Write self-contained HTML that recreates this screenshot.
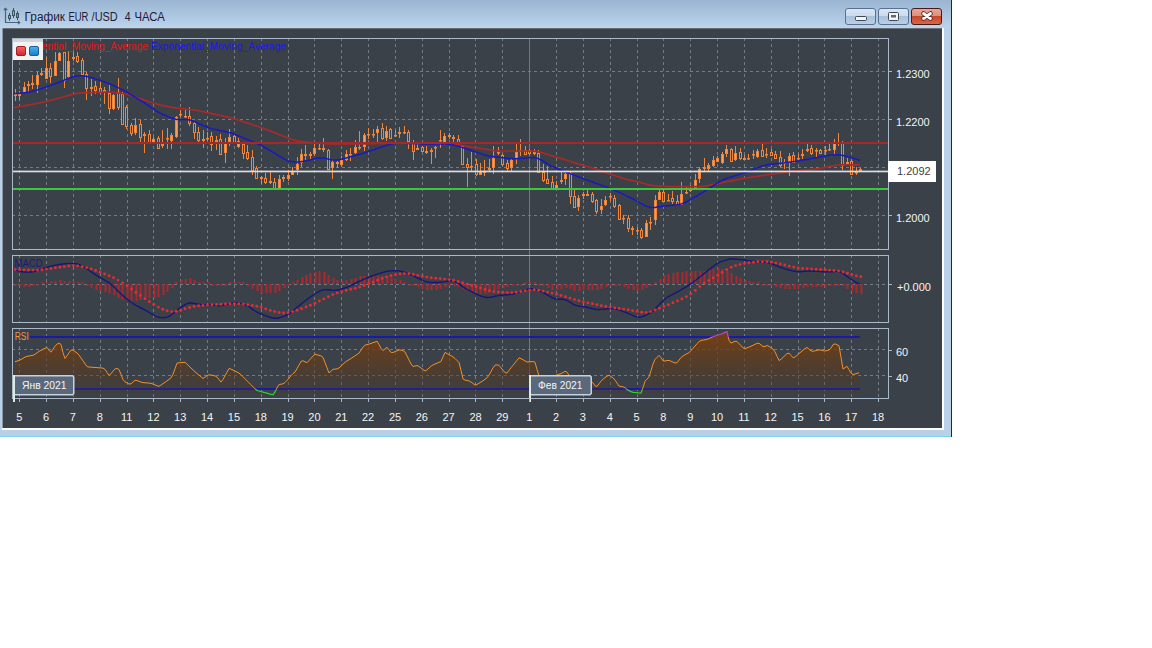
<!DOCTYPE html>
<html><head><meta charset="utf-8"><title>EUR/USD</title>
<style>html,body{margin:0;padding:0;background:#fff;width:1152px;height:648px;overflow:hidden;position:relative}</style>
</head><body>
<svg width="1152" height="648" viewBox="0 0 1152 648" style="position:absolute;left:0;top:0;font-family:'Liberation Sans', sans-serif"><defs>
<linearGradient id="tb" x1="0" y1="0" x2="0" y2="1">
<stop offset="0" stop-color="#9ab5d2"/><stop offset="1" stop-color="#bcd4ec"/></linearGradient>
<linearGradient id="rsifill" x1="0" y1="0" x2="0" y2="1">
<stop offset="0" stop-color="#7c400e" stop-opacity="0.95"/><stop offset="0.55" stop-color="#5e3a1c" stop-opacity="0.6"/><stop offset="1" stop-color="#4a3420" stop-opacity="0.05"/></linearGradient>
<linearGradient id="bmin" x1="0" y1="0" x2="0" y2="1">
<stop offset="0" stop-color="#dbe7f3"/><stop offset="0.5" stop-color="#c9daec"/><stop offset="0.5" stop-color="#a9c1da"/><stop offset="1" stop-color="#bcd0e6"/></linearGradient>
<linearGradient id="bcls" x1="0" y1="0" x2="0" y2="1">
<stop offset="0" stop-color="#eaa898"/><stop offset="0.5" stop-color="#de8c78"/><stop offset="0.5" stop-color="#c8482c"/><stop offset="1" stop-color="#d8684a"/></linearGradient>
<linearGradient id="lgr" x1="0" y1="0" x2="0" y2="1"><stop offset="0" stop-color="#f06a6a"/><stop offset="1" stop-color="#d0242c"/></linearGradient>
<linearGradient id="lgb" x1="0" y1="0" x2="0" y2="1"><stop offset="0" stop-color="#4cb4ee"/><stop offset="1" stop-color="#1a7cc8"/></linearGradient>
</defs><rect x="0" y="0" width="952" height="437" fill="#bad0e8"/><rect x="0" y="0" width="951" height="28" fill="url(#tb)"/><rect x="951" y="0" width="1" height="437" fill="#1a2a3a"/><rect x="0" y="436" width="951" height="1" fill="#7fd4e8"/><rect x="2" y="28" width="942" height="402" fill="#ffffff"/><rect x="2" y="28" width="1" height="400" fill="#8c98a6"/><rect x="3" y="28" width="939" height="400" fill="#3b4149"/><rect x="3" y="28" width="939" height="1" fill="#6a6e72"/><g stroke="#4a6478" fill="none" stroke-width="1.2"><path d="M5.5 8.5 V22.5 H19.5"/><path d="M3.8 10 L5.5 8.3 L7.2 10"/><path d="M18 20.8 L19.7 22.5 L18 24.2"/></g><line x1="9.5" y1="13" x2="9.5" y2="20.7" stroke="#34505a" stroke-width="1"/><rect x="8.0" y="15" width="3" height="4" fill="#3a5660"/><rect x="9.0" y="16" width="1" height="2" fill="#8cc07a"/><line x1="13.5" y1="8.1" x2="13.5" y2="18" stroke="#34505a" stroke-width="1"/><rect x="12.0" y="10.3" width="3" height="5.699999999999999" fill="#3a5660"/><rect x="13.0" y="11.3" width="1" height="3.6999999999999993" fill="#8cc07a"/><line x1="17.5" y1="11.2" x2="17.5" y2="20" stroke="#34505a" stroke-width="1"/><rect x="16.0" y="13" width="3" height="5" fill="#3a5660"/><rect x="17.0" y="14" width="1" height="3" fill="#b07a88"/><text x="24.6" y="20.5" font-size="12" fill="#221a3a" textLength="40.3" lengthAdjust="spacingAndGlyphs">График</text><text x="68.4" y="20.5" font-size="12" fill="#221a3a" textLength="20" lengthAdjust="spacingAndGlyphs">EUR</text><text x="91.6" y="20.5" font-size="12" fill="#221a3a" textLength="26.1" lengthAdjust="spacingAndGlyphs">/USD</text><text x="124.8" y="20.5" font-size="12" fill="#221a3a" textLength="5.9" lengthAdjust="spacingAndGlyphs">4</text><text x="134.6" y="20.5" font-size="12" fill="#221a3a" textLength="30.2" lengthAdjust="spacingAndGlyphs">ЧАСА</text><rect x="845.5" y="8.5" width="30" height="16" rx="2.5" fill="url(#bmin)" stroke="#5a7090"/><rect x="855.5" y="16.5" width="11" height="4" rx="1" fill="#f4f4f4" stroke="#3a4a5a"/><rect x="878.5" y="8.5" width="30" height="16" rx="2.5" fill="url(#bmin)" stroke="#5a7090"/><rect x="888.5" y="12.5" width="10" height="8" rx="1" fill="#f4f4f4" stroke="#3a4a5a"/><rect x="891" y="15" width="5" height="2.5" fill="#5a6a7a"/><rect x="911.5" y="8.5" width="30" height="16" rx="2.5" fill="url(#bcls)" stroke="#4a1818"/><path d="M923.5 13.5 L930.5 18.5 M930.5 13.5 L923.5 18.5" stroke="#5a2a2a" stroke-width="4.6" stroke-linecap="round"/><path d="M923.5 13.5 L930.5 18.5 M930.5 13.5 L923.5 18.5" stroke="#ffffff" stroke-width="2.8" stroke-linecap="round"/><path d="M19.5 38 V249 M46.5 38 V249 M73.5 38 V249 M100.5 38 V249 M127.5 38 V249 M153.5 38 V249 M180.5 38 V249 M207.5 38 V249 M234.5 38 V249 M261.5 38 V249 M288.5 38 V249 M314.5 38 V249 M341.5 38 V249 M368.5 38 V249 M395.5 38 V249 M422.5 38 V249 M449.5 38 V249 M475.5 38 V249 M502.5 38 V249 M529.5 38 V249 M556.5 38 V249 M583.5 38 V249 M610.5 38 V249 M637.5 38 V249 M663.5 38 V249 M690.5 38 V249 M717.5 38 V249 M744.5 38 V249 M771.5 38 V249 M798.5 38 V249 M824.5 38 V249 M851.5 38 V249 M878.5 38 V249" stroke="#737b84" stroke-width="1" stroke-dasharray="3 3" fill="none"/><path d="M19.5 255 V322 M46.5 255 V322 M73.5 255 V322 M100.5 255 V322 M127.5 255 V322 M153.5 255 V322 M180.5 255 V322 M207.5 255 V322 M234.5 255 V322 M261.5 255 V322 M288.5 255 V322 M314.5 255 V322 M341.5 255 V322 M368.5 255 V322 M395.5 255 V322 M422.5 255 V322 M449.5 255 V322 M475.5 255 V322 M502.5 255 V322 M529.5 255 V322 M556.5 255 V322 M583.5 255 V322 M610.5 255 V322 M637.5 255 V322 M663.5 255 V322 M690.5 255 V322 M717.5 255 V322 M744.5 255 V322 M771.5 255 V322 M798.5 255 V322 M824.5 255 V322 M851.5 255 V322 M878.5 255 V322" stroke="#737b84" stroke-width="1" stroke-dasharray="3 3" fill="none"/><path d="M19.5 328 V398 M46.5 328 V398 M73.5 328 V398 M100.5 328 V398 M127.5 328 V398 M153.5 328 V398 M180.5 328 V398 M207.5 328 V398 M234.5 328 V398 M261.5 328 V398 M288.5 328 V398 M314.5 328 V398 M341.5 328 V398 M368.5 328 V398 M395.5 328 V398 M422.5 328 V398 M449.5 328 V398 M475.5 328 V398 M502.5 328 V398 M529.5 328 V398 M556.5 328 V398 M583.5 328 V398 M610.5 328 V398 M637.5 328 V398 M663.5 328 V398 M690.5 328 V398 M717.5 328 V398 M744.5 328 V398 M771.5 328 V398 M798.5 328 V398 M824.5 328 V398 M851.5 328 V398 M878.5 328 V398" stroke="#737b84" stroke-width="1" stroke-dasharray="3 3" fill="none"/><path d="M12 71.5 H888 M12 119.5 H888 M12 167.5 H888 M12 215.5 H888" stroke="#737b84" stroke-width="1" stroke-dasharray="3 3" fill="none"/><path d="M12 284.5 H888" stroke="#737b84" stroke-width="1" stroke-dasharray="3 3" fill="none"/><path d="M12 349.5 H888 M12 375.5 H888" stroke="#737b84" stroke-width="1" stroke-dasharray="3 3" fill="none"/><line x1="529.5" y1="38" x2="529.5" y2="398" stroke="#687a8c" stroke-width="1"/><path d="M15.5 89 V101 M19.5 91 V100 M24.5 82 V93 M28.5 81 V93 M32.5 75 V89 M37.5 72 V93 M41.5 68 V76 M46.5 57 V78 M50.5 63 V83 M55.5 52 V76 M59.5 52 V61 M64.5 52 V88 M68.5 51 V78 M73.5 52 V61 M77.5 52 V63 M82.5 58 V74 M86.5 72 V100 M91.5 79 V96 M95.5 81 V94 M100.5 82 V94 M104.5 87 V104 M109.5 85 V114 M113.5 94 V110 M118.5 78 V110 M122.5 92 V125 M126.5 105 V129 M131.5 123 V136 M135.5 118 V135 M140.5 120 V142 M144.5 132 V153 M149.5 130 V144 M153.5 137 V144 M158.5 136 V149 M162.5 130 V148 M167.5 128 V149 M171.5 133 V149 M176.5 116 V138 M180.5 110 V117 M185.5 110 V118 M189.5 107 V126 M194.5 121 V139 M198.5 127 V143 M203.5 130 V148 M207.5 132 V141 M211.5 132 V151 M216.5 136 V150 M220.5 134 V154 M225.5 138 V163 M229.5 129 V146 M234.5 135 V142 M238.5 138 V148 M243.5 144 V159 M247.5 145 V160 M252.5 150 V175 M256.5 166 V179 M261.5 176 V184 M265.5 173 V184 M270.5 172 V184 M274.5 178 V189 M279.5 175 V188 M283.5 175 V182 M288.5 170 V181 M292.5 167 V175 M297.5 157 V175 M301.5 149 V167 M305.5 145 V160 M310.5 152 V159 M314.5 144 V156 M319.5 143 V150 M323.5 138 V152 M328.5 149 V170 M332.5 159 V179 M337.5 161 V168 M341.5 156 V167 M346.5 150 V161 M350.5 148 V161 M355.5 140 V154 M359.5 131 V150 M364.5 133 V151 M368.5 128 V139 M373.5 129 V138 M377.5 126 V143 M382.5 123 V140 M386.5 126 V141 M390.5 128 V138 M395.5 130 V137 M399.5 127 V138 M404.5 126 V134 M408.5 130 V149 M413.5 140 V160 M417.5 144 V150 M422.5 146 V152 M426.5 146 V154 M431.5 148 V164 M435.5 146 V158 M440.5 130 V148 M444.5 133 V145 M449.5 133 V139 M453.5 135 V142 M458.5 135 V144 M462.5 146 V165 M467.5 158 V187 M471.5 152 V171 M476.5 159 V176 M480.5 163 V174 M484.5 160 V176 M489.5 159 V171 M493.5 146 V174 M498.5 147 V155 M502.5 154 V166 M507.5 160 V171 M511.5 158 V171 M516.5 144 V164 M520.5 139 V156 M525.5 146 V155 M529.5 149 V155 M534.5 149 V155 M538.5 150 V173 M543.5 164 V182 M547.5 166 V183 M552.5 176 V189 M556.5 181 V189 M561.5 172 V184 M565.5 172 V185 M570.5 172 V204 M574.5 190 V208 M578.5 195 V211 M583.5 192 V199 M587.5 190 V196 M592.5 192 V203 M596.5 199 V214 M601.5 199 V214 M605.5 196 V206 M610.5 193 V201 M614.5 195 V208 M619.5 204 V219 M623.5 215 V224 M628.5 215 V232 M632.5 226 V235 M637.5 227 V235 M641.5 228 V239 M646.5 220 V236 M650.5 217 V230 M655.5 195 V225 M659.5 190 V200 M663.5 188 V202 M668.5 194 V201 M672.5 191 V204 M677.5 195 V204 M681.5 182 V204 M686.5 186 V194 M690.5 185 V192 M695.5 174 V188 M699.5 167 V183 M704.5 158 V171 M708.5 163 V172 M713.5 156 V167 M717.5 156 V162 M722.5 152 V164 M726.5 145 V157 M731.5 148 V162 M735.5 146 V161 M740.5 148 V160 M744.5 155 V160 M748.5 154 V160 M753.5 150 V159 M757.5 149 V158 M762.5 142 V156 M766.5 148 V158 M771.5 149 V155 M775.5 151 V158 M780.5 151 V167 M784.5 159 V169 M789.5 153 V176 M793.5 152 V162 M798.5 154 V160 M802.5 149 V159 M807.5 144 V152 M811.5 145 V155 M816.5 148 V158 M820.5 149 V153 M825.5 146 V156 M829.5 142 V151 M834.5 139 V154 M838.5 133 V146 M842.5 141 V170 M847.5 158 V164 M851.5 160 V174 M856.5 167 V175 M860.5 168 V171" stroke="#f0853c" stroke-width="1" fill="none"/><rect x="14" y="94" width="3" height="2" fill="#f0853c"/><rect x="18" y="94" width="3" height="2" fill="#f0853c"/><rect x="23.5" y="87.5" width="2" height="5" fill="#f6a060" stroke="#f0853c" stroke-width="1"/><rect x="27" y="84" width="3" height="2" fill="#f0853c"/><rect x="31" y="83" width="3" height="2" fill="#f0853c"/><rect x="36.5" y="75.5" width="2" height="9" fill="#f6a060" stroke="#f0853c" stroke-width="1"/><rect x="40" y="73" width="3" height="2" fill="#f0853c"/><rect x="45.5" y="68.5" width="2" height="10" fill="#f6a060" stroke="#f0853c" stroke-width="1"/><rect x="49.5" y="68.5" width="2" height="8" fill="#3b4149" stroke="#f0853c" stroke-width="1"/><rect x="54.5" y="61.5" width="2" height="14" fill="#f6a060" stroke="#f0853c" stroke-width="1"/><rect x="58.5" y="53.5" width="2" height="7" fill="#f6a060" stroke="#f0853c" stroke-width="1"/><rect x="63.5" y="52.5" width="2" height="28" fill="#3b4149" stroke="#f0853c" stroke-width="1"/><rect x="67.5" y="61.5" width="2" height="15" fill="#f6a060" stroke="#f0853c" stroke-width="1"/><rect x="72" y="57" width="3" height="2" fill="#f0853c"/><rect x="76.5" y="56.5" width="2" height="5" fill="#3b4149" stroke="#f0853c" stroke-width="1"/><rect x="81.5" y="60.5" width="2" height="14" fill="#3b4149" stroke="#f0853c" stroke-width="1"/><rect x="85.5" y="74.5" width="2" height="14" fill="#3b4149" stroke="#f0853c" stroke-width="1"/><rect x="90" y="87" width="3" height="2" fill="#f0853c"/><rect x="94.5" y="86.5" width="2" height="4" fill="#3b4149" stroke="#f0853c" stroke-width="1"/><rect x="99.5" y="88.5" width="2" height="4" fill="#3b4149" stroke="#f0853c" stroke-width="1"/><rect x="103" y="90" width="3" height="2" fill="#f0853c"/><rect x="108.5" y="93.5" width="2" height="15" fill="#3b4149" stroke="#f0853c" stroke-width="1"/><rect x="112.5" y="95.5" width="2" height="13" fill="#f6a060" stroke="#f0853c" stroke-width="1"/><rect x="117.5" y="92.5" width="2" height="15" fill="#3b4149" stroke="#f0853c" stroke-width="1"/><rect x="121.5" y="94.5" width="2" height="30" fill="#3b4149" stroke="#f0853c" stroke-width="1"/><rect x="125.5" y="107.5" width="2" height="19" fill="#3b4149" stroke="#f0853c" stroke-width="1"/><rect x="130.5" y="125.5" width="2" height="8" fill="#3b4149" stroke="#f0853c" stroke-width="1"/><rect x="134.5" y="125.5" width="2" height="7" fill="#f6a060" stroke="#f0853c" stroke-width="1"/><rect x="139.5" y="124.5" width="2" height="13" fill="#3b4149" stroke="#f0853c" stroke-width="1"/><rect x="143" y="134" width="3" height="2" fill="#f0853c"/><rect x="148.5" y="134.5" width="2" height="9" fill="#3b4149" stroke="#f0853c" stroke-width="1"/><rect x="152.5" y="139.5" width="2" height="3" fill="#f6a060" stroke="#f0853c" stroke-width="1"/><rect x="157.5" y="138.5" width="2" height="10" fill="#3b4149" stroke="#f0853c" stroke-width="1"/><rect x="161" y="144" width="3" height="2" fill="#f0853c"/><rect x="166" y="138" width="3" height="1.5" fill="#f0853c"/><rect x="170.5" y="135.5" width="2" height="5" fill="#f6a060" stroke="#f0853c" stroke-width="1"/><rect x="175.5" y="117.5" width="2" height="19" fill="#f6a060" stroke="#f0853c" stroke-width="1"/><rect x="179" y="114" width="3" height="1.5" fill="#f0853c"/><rect x="184" y="116" width="3" height="1.5" fill="#f0853c"/><rect x="188.5" y="116.5" width="2" height="7" fill="#3b4149" stroke="#f0853c" stroke-width="1"/><rect x="193.5" y="123.5" width="2" height="9" fill="#3b4149" stroke="#f0853c" stroke-width="1"/><rect x="197.5" y="132.5" width="2" height="8" fill="#3b4149" stroke="#f0853c" stroke-width="1"/><rect x="202" y="139" width="3" height="2" fill="#f0853c"/><rect x="206" y="138" width="3" height="1.5" fill="#f0853c"/><rect x="210.5" y="136.5" width="2" height="8" fill="#3b4149" stroke="#f0853c" stroke-width="1"/><rect x="215" y="140" width="3" height="2" fill="#f0853c"/><rect x="219.5" y="139.5" width="2" height="15" fill="#3b4149" stroke="#f0853c" stroke-width="1"/><rect x="224.5" y="143.5" width="2" height="9" fill="#f6a060" stroke="#f0853c" stroke-width="1"/><rect x="228.5" y="137.5" width="2" height="4" fill="#f6a060" stroke="#f0853c" stroke-width="1"/><rect x="233.5" y="136.5" width="2" height="6" fill="#3b4149" stroke="#f0853c" stroke-width="1"/><rect x="237.5" y="141.5" width="2" height="5" fill="#f6a060" stroke="#f0853c" stroke-width="1"/><rect x="242.5" y="144.5" width="2" height="9" fill="#3b4149" stroke="#f0853c" stroke-width="1"/><rect x="246.5" y="152.5" width="2" height="6" fill="#3b4149" stroke="#f0853c" stroke-width="1"/><rect x="251.5" y="157.5" width="2" height="13" fill="#3b4149" stroke="#f0853c" stroke-width="1"/><rect x="255.5" y="168.5" width="2" height="10" fill="#3b4149" stroke="#f0853c" stroke-width="1"/><rect x="260" y="177" width="3" height="2" fill="#f0853c"/><rect x="264.5" y="178.5" width="2" height="4" fill="#3b4149" stroke="#f0853c" stroke-width="1"/><rect x="269" y="181" width="3" height="2" fill="#f0853c"/><rect x="273.5" y="182.5" width="2" height="6" fill="#3b4149" stroke="#f0853c" stroke-width="1"/><rect x="278.5" y="179.5" width="2" height="9" fill="#f6a060" stroke="#f0853c" stroke-width="1"/><rect x="282" y="177" width="3" height="2" fill="#f0853c"/><rect x="287.5" y="175.5" width="2" height="3" fill="#f6a060" stroke="#f0853c" stroke-width="1"/><rect x="291.5" y="171.5" width="2" height="3" fill="#f6a060" stroke="#f0853c" stroke-width="1"/><rect x="296.5" y="164.5" width="2" height="5" fill="#f6a060" stroke="#f0853c" stroke-width="1"/><rect x="300.5" y="154.5" width="2" height="8" fill="#f6a060" stroke="#f0853c" stroke-width="1"/><rect x="304" y="154" width="3" height="2" fill="#f0853c"/><rect x="309" y="154" width="3" height="2" fill="#f0853c"/><rect x="313.5" y="148.5" width="2" height="5" fill="#f6a060" stroke="#f0853c" stroke-width="1"/><rect x="318" y="148" width="3" height="1.5" fill="#f0853c"/><rect x="322" y="148" width="3" height="2" fill="#f0853c"/><rect x="327.5" y="150.5" width="2" height="19" fill="#3b4149" stroke="#f0853c" stroke-width="1"/><rect x="331.5" y="162.5" width="2" height="5" fill="#f6a060" stroke="#f0853c" stroke-width="1"/><rect x="336" y="162" width="3" height="2" fill="#f0853c"/><rect x="340.5" y="160.5" width="2" height="4" fill="#f6a060" stroke="#f0853c" stroke-width="1"/><rect x="345.5" y="154.5" width="2" height="5" fill="#f6a060" stroke="#f0853c" stroke-width="1"/><rect x="349" y="154" width="3" height="1.5" fill="#f0853c"/><rect x="354.5" y="147.5" width="2" height="5" fill="#f6a060" stroke="#f0853c" stroke-width="1"/><rect x="358" y="147" width="3" height="1.5" fill="#f0853c"/><rect x="363.5" y="135.5" width="2" height="11" fill="#f6a060" stroke="#f0853c" stroke-width="1"/><rect x="367" y="134" width="3" height="1.5" fill="#f0853c"/><rect x="372" y="134" width="3" height="1.5" fill="#f0853c"/><rect x="376.5" y="129.5" width="2" height="3" fill="#f6a060" stroke="#f0853c" stroke-width="1"/><rect x="381.5" y="128.5" width="2" height="10" fill="#3b4149" stroke="#f0853c" stroke-width="1"/><rect x="385.5" y="131.5" width="2" height="6" fill="#f6a060" stroke="#f0853c" stroke-width="1"/><rect x="389.5" y="129.5" width="2" height="9" fill="#3b4149" stroke="#f0853c" stroke-width="1"/><rect x="394" y="135" width="3" height="1.5" fill="#f0853c"/><rect x="398" y="132" width="3" height="2" fill="#f0853c"/><rect x="403" y="132" width="3" height="1.5" fill="#f0853c"/><rect x="407.5" y="132.5" width="2" height="9" fill="#3b4149" stroke="#f0853c" stroke-width="1"/><rect x="412.5" y="142.5" width="2" height="9" fill="#3b4149" stroke="#f0853c" stroke-width="1"/><rect x="416" y="148" width="3" height="2" fill="#f0853c"/><rect x="421.5" y="147.5" width="2" height="4" fill="#3b4149" stroke="#f0853c" stroke-width="1"/><rect x="425" y="151" width="3" height="2" fill="#f0853c"/><rect x="430" y="150" width="3" height="2" fill="#f0853c"/><rect x="434" y="147" width="3" height="1.5" fill="#f0853c"/><rect x="439" y="140" width="3" height="1.5" fill="#f0853c"/><rect x="443.5" y="136.5" width="2" height="7" fill="#f6a060" stroke="#f0853c" stroke-width="1"/><rect x="448" y="135" width="3" height="2" fill="#f0853c"/><rect x="452" y="137" width="3" height="2" fill="#f0853c"/><rect x="457.5" y="139.5" width="2" height="4" fill="#3b4149" stroke="#f0853c" stroke-width="1"/><rect x="461.5" y="146.5" width="2" height="18" fill="#3b4149" stroke="#f0853c" stroke-width="1"/><rect x="466.5" y="164.5" width="2" height="3" fill="#3b4149" stroke="#f0853c" stroke-width="1"/><rect x="470" y="166" width="3" height="1.5" fill="#f0853c"/><rect x="475.5" y="164.5" width="2" height="10" fill="#3b4149" stroke="#f0853c" stroke-width="1"/><rect x="479.5" y="171.5" width="2" height="3" fill="#f6a060" stroke="#f0853c" stroke-width="1"/><rect x="483" y="171" width="3" height="2" fill="#f0853c"/><rect x="488" y="168" width="3" height="2" fill="#f0853c"/><rect x="492.5" y="158.5" width="2" height="9" fill="#f6a060" stroke="#f0853c" stroke-width="1"/><rect x="497" y="152" width="3" height="1.5" fill="#f0853c"/><rect x="501.5" y="155.5" width="2" height="9" fill="#3b4149" stroke="#f0853c" stroke-width="1"/><rect x="506.5" y="163.5" width="2" height="5" fill="#3b4149" stroke="#f0853c" stroke-width="1"/><rect x="510.5" y="160.5" width="2" height="7" fill="#f6a060" stroke="#f0853c" stroke-width="1"/><rect x="515.5" y="152.5" width="2" height="6" fill="#f6a060" stroke="#f0853c" stroke-width="1"/><rect x="519" y="150" width="3" height="1.5" fill="#f0853c"/><rect x="524.5" y="150.5" width="2" height="4" fill="#3b4149" stroke="#f0853c" stroke-width="1"/><rect x="528.5" y="150.5" width="2" height="3" fill="#3b4149" stroke="#f0853c" stroke-width="1"/><rect x="533" y="152" width="3" height="2" fill="#f0853c"/><rect x="537.5" y="153.5" width="2" height="19" fill="#3b4149" stroke="#f0853c" stroke-width="1"/><rect x="542.5" y="172.5" width="2" height="8" fill="#3b4149" stroke="#f0853c" stroke-width="1"/><rect x="546.5" y="179.5" width="2" height="4" fill="#3b4149" stroke="#f0853c" stroke-width="1"/><rect x="551.5" y="182.5" width="2" height="7" fill="#3b4149" stroke="#f0853c" stroke-width="1"/><rect x="555.5" y="185.5" width="2" height="3" fill="#f6a060" stroke="#f0853c" stroke-width="1"/><rect x="560" y="180" width="3" height="2" fill="#f0853c"/><rect x="564.5" y="174.5" width="2" height="4" fill="#f6a060" stroke="#f0853c" stroke-width="1"/><rect x="569.5" y="173.5" width="2" height="23" fill="#3b4149" stroke="#f0853c" stroke-width="1"/><rect x="573.5" y="196.5" width="2" height="11" fill="#3b4149" stroke="#f0853c" stroke-width="1"/><rect x="577.5" y="198.5" width="2" height="8" fill="#f6a060" stroke="#f0853c" stroke-width="1"/><rect x="582" y="194" width="3" height="2" fill="#f0853c"/><rect x="586" y="194" width="3" height="2" fill="#f0853c"/><rect x="591.5" y="194.5" width="2" height="7" fill="#3b4149" stroke="#f0853c" stroke-width="1"/><rect x="595.5" y="200.5" width="2" height="11" fill="#3b4149" stroke="#f0853c" stroke-width="1"/><rect x="600.5" y="206.5" width="2" height="3" fill="#f6a060" stroke="#f0853c" stroke-width="1"/><rect x="604.5" y="200.5" width="2" height="4" fill="#f6a060" stroke="#f0853c" stroke-width="1"/><rect x="609" y="196" width="3" height="1.5" fill="#f0853c"/><rect x="613.5" y="198.5" width="2" height="8" fill="#3b4149" stroke="#f0853c" stroke-width="1"/><rect x="618.5" y="205.5" width="2" height="14" fill="#3b4149" stroke="#f0853c" stroke-width="1"/><rect x="622" y="218" width="3" height="1.5" fill="#f0853c"/><rect x="627.5" y="218.5" width="2" height="10" fill="#3b4149" stroke="#f0853c" stroke-width="1"/><rect x="631" y="228" width="3" height="2" fill="#f0853c"/><rect x="636" y="230" width="3" height="1.5" fill="#f0853c"/><rect x="640.5" y="230.5" width="2" height="7" fill="#3b4149" stroke="#f0853c" stroke-width="1"/><rect x="645.5" y="223.5" width="2" height="13" fill="#f6a060" stroke="#f0853c" stroke-width="1"/><rect x="649" y="222" width="3" height="1.5" fill="#f0853c"/><rect x="654.5" y="200.5" width="2" height="19" fill="#f6a060" stroke="#f0853c" stroke-width="1"/><rect x="658.5" y="192.5" width="2" height="7" fill="#f6a060" stroke="#f0853c" stroke-width="1"/><rect x="662.5" y="192.5" width="2" height="9" fill="#3b4149" stroke="#f0853c" stroke-width="1"/><rect x="667" y="200" width="3" height="1.5" fill="#f0853c"/><rect x="671.5" y="198.5" width="2" height="3" fill="#3b4149" stroke="#f0853c" stroke-width="1"/><rect x="676.5" y="201.5" width="2" height="3" fill="#3b4149" stroke="#f0853c" stroke-width="1"/><rect x="680.5" y="194.5" width="2" height="10" fill="#f6a060" stroke="#f0853c" stroke-width="1"/><rect x="685" y="192" width="3" height="1.5" fill="#f0853c"/><rect x="689" y="189" width="3" height="2" fill="#f0853c"/><rect x="694.5" y="180.5" width="2" height="7" fill="#f6a060" stroke="#f0853c" stroke-width="1"/><rect x="698.5" y="169.5" width="2" height="9" fill="#f6a060" stroke="#f0853c" stroke-width="1"/><rect x="703" y="167" width="3" height="2" fill="#f0853c"/><rect x="707.5" y="165.5" width="2" height="3" fill="#f6a060" stroke="#f0853c" stroke-width="1"/><rect x="712.5" y="160.5" width="2" height="5" fill="#f6a060" stroke="#f0853c" stroke-width="1"/><rect x="716.5" y="158.5" width="2" height="3" fill="#f6a060" stroke="#f0853c" stroke-width="1"/><rect x="721.5" y="154.5" width="2" height="8" fill="#f6a060" stroke="#f0853c" stroke-width="1"/><rect x="725.5" y="149.5" width="2" height="4" fill="#f6a060" stroke="#f0853c" stroke-width="1"/><rect x="730.5" y="149.5" width="2" height="12" fill="#3b4149" stroke="#f0853c" stroke-width="1"/><rect x="734.5" y="153.5" width="2" height="6" fill="#f6a060" stroke="#f0853c" stroke-width="1"/><rect x="739.5" y="152.5" width="2" height="6" fill="#3b4149" stroke="#f0853c" stroke-width="1"/><rect x="743" y="158" width="3" height="2" fill="#f0853c"/><rect x="747" y="158" width="3" height="1.5" fill="#f0853c"/><rect x="752" y="154" width="3" height="1.5" fill="#f0853c"/><rect x="756.5" y="151.5" width="2" height="5" fill="#f6a060" stroke="#f0853c" stroke-width="1"/><rect x="761.5" y="150.5" width="2" height="6" fill="#3b4149" stroke="#f0853c" stroke-width="1"/><rect x="765" y="154" width="3" height="1.5" fill="#f0853c"/><rect x="770.5" y="152.5" width="2" height="3" fill="#3b4149" stroke="#f0853c" stroke-width="1"/><rect x="774.5" y="154.5" width="2" height="4" fill="#3b4149" stroke="#f0853c" stroke-width="1"/><rect x="779.5" y="157.5" width="2" height="8" fill="#3b4149" stroke="#f0853c" stroke-width="1"/><rect x="783" y="162" width="3" height="2" fill="#f0853c"/><rect x="788.5" y="156.5" width="2" height="5" fill="#f6a060" stroke="#f0853c" stroke-width="1"/><rect x="792.5" y="155.5" width="2" height="7" fill="#3b4149" stroke="#f0853c" stroke-width="1"/><rect x="797" y="158" width="3" height="1.5" fill="#f0853c"/><rect x="801" y="154" width="3" height="2" fill="#f0853c"/><rect x="806" y="149" width="3" height="2" fill="#f0853c"/><rect x="810.5" y="148.5" width="2" height="5" fill="#3b4149" stroke="#f0853c" stroke-width="1"/><rect x="815" y="150" width="3" height="1.5" fill="#f0853c"/><rect x="819.5" y="150.5" width="2" height="3" fill="#3b4149" stroke="#f0853c" stroke-width="1"/><rect x="824" y="150" width="3" height="1.5" fill="#f0853c"/><rect x="828" y="149" width="3" height="1.5" fill="#f0853c"/><rect x="833.5" y="142.5" width="2" height="7" fill="#f6a060" stroke="#f0853c" stroke-width="1"/><rect x="837" y="142" width="3" height="1.5" fill="#f0853c"/><rect x="841.5" y="142.5" width="2" height="23" fill="#3b4149" stroke="#f0853c" stroke-width="1"/><rect x="846" y="162" width="3" height="2" fill="#f0853c"/><rect x="850.5" y="161.5" width="2" height="13" fill="#3b4149" stroke="#f0853c" stroke-width="1"/><rect x="855" y="172" width="3" height="1.5" fill="#f0853c"/><rect x="859" y="169" width="3" height="2" fill="#f0853c"/><polyline points="12.0,107.7 13.0,107.6 14.0,107.5 15.0,107.4 16.0,107.2 17.0,107.1 18.0,106.9 19.0,106.7 20.0,106.5 21.0,106.3 22.0,106.2 23.0,106.0 24.0,105.8 25.0,105.6 26.0,105.4 27.0,105.2 28.0,105.1 29.0,104.9 30.0,104.7 31.0,104.5 32.0,104.3 33.0,104.1 34.0,104.0 35.0,103.8 36.0,103.6 37.0,103.4 38.0,103.2 39.0,103.0 40.0,102.8 41.0,102.6 42.0,102.4 43.0,102.2 44.0,102.0 45.0,101.8 46.0,101.6 47.0,101.3 48.0,101.1 49.0,100.8 50.0,100.5 51.0,100.3 52.0,100.0 53.0,99.7 54.0,99.4 55.0,99.2 56.0,98.9 57.0,98.6 58.0,98.4 59.0,98.1 60.0,97.8 61.0,97.5 62.0,97.3 63.0,97.0 64.0,96.7 65.0,96.4 66.0,96.2 67.0,95.9 68.0,95.6 69.0,95.3 70.0,95.1 71.0,94.8 72.0,94.5 73.0,94.3 74.0,94.1 75.0,93.8 76.0,93.6 77.0,93.5 78.0,93.3 79.0,93.2 80.0,93.1 81.0,93.0 82.0,92.9 83.0,92.9 84.0,92.8 85.0,92.8 86.0,92.7 87.0,92.7 88.0,92.7 89.0,92.6 90.0,92.6 91.0,92.6 92.0,92.6 93.0,92.5 94.0,92.5 95.0,92.5 96.0,92.4 97.0,92.4 98.0,92.4 99.0,92.3 100.0,92.3 101.0,92.3 102.0,92.3 103.0,92.2 104.0,92.2 105.0,92.2 106.0,92.2 107.0,92.2 108.0,92.2 109.0,92.2 110.0,92.2 111.0,92.3 112.0,92.3 113.0,92.4 114.0,92.5 115.0,92.6 116.0,92.7 117.0,92.8 118.0,93.0 119.0,93.1 120.0,93.2 121.0,93.3 122.0,93.5 123.0,93.6 124.0,93.8 125.0,94.0 126.0,94.2 127.0,94.4 128.0,94.7 129.0,94.9 130.0,95.2 131.0,95.5 132.0,95.8 133.0,96.2 134.0,96.5 135.0,96.8 136.0,97.2 137.0,97.5 138.0,97.8 139.0,98.2 140.0,98.5 141.0,98.8 142.0,99.2 143.0,99.5 144.0,99.9 145.0,100.2 146.0,100.5 147.0,100.9 148.0,101.2 149.0,101.5 150.0,101.9 151.0,102.2 152.0,102.5 153.0,102.9 154.0,103.2 155.0,103.5 156.0,103.8 157.0,104.1 158.0,104.4 159.0,104.7 160.0,104.9 161.0,105.2 162.0,105.4 163.0,105.6 164.0,105.8 165.0,106.0 166.0,106.2 167.0,106.4 168.0,106.6 169.0,106.8 170.0,106.9 171.0,107.1 172.0,107.3 173.0,107.5 174.0,107.6 175.0,107.8 176.0,107.9 177.0,108.1 178.0,108.2 179.0,108.3 180.0,108.4 181.0,108.5 182.0,108.6 183.0,108.7 184.0,108.8 185.0,108.9 186.0,109.1 187.0,109.2 188.0,109.3 189.0,109.4 190.0,109.5 191.0,109.6 192.0,109.7 193.0,109.8 194.0,110.0 195.0,110.1 196.0,110.3 197.0,110.5 198.0,110.7 199.0,110.8 200.0,111.0 201.0,111.3 202.0,111.5 203.0,111.7 204.0,111.9 205.0,112.1 206.0,112.3 207.0,112.6 208.0,112.8 209.0,113.0 210.0,113.2 211.0,113.4 212.0,113.6 213.0,113.9 214.0,114.1 215.0,114.3 216.0,114.5 217.0,114.7 218.0,114.9 219.0,115.2 220.0,115.4 221.0,115.6 222.0,115.8 223.0,116.0 224.0,116.3 225.0,116.5 226.0,116.7 227.0,116.9 228.0,117.2 229.0,117.4 230.0,117.6 231.0,117.9 232.0,118.2 233.0,118.4 234.0,118.7 235.0,119.0 236.0,119.3 237.0,119.6 238.0,120.0 239.0,120.3 240.0,120.6 241.0,120.9 242.0,121.3 243.0,121.6 244.0,121.9 245.0,122.2 246.0,122.6 247.0,122.9 248.0,123.2 249.0,123.5 250.0,123.9 251.0,124.2 252.0,124.5 253.0,124.8 254.0,125.2 255.0,125.5 256.0,125.8 257.0,126.2 258.0,126.5 259.0,126.8 260.0,127.2 261.0,127.5 262.0,127.9 263.0,128.2 264.0,128.6 265.0,129.0 266.0,129.3 267.0,129.7 268.0,130.1 269.0,130.5 270.0,130.9 271.0,131.3 272.0,131.7 273.0,132.1 274.0,132.5 275.0,132.9 276.0,133.3 277.0,133.7 278.0,134.1 279.0,134.5 280.0,134.9 281.0,135.3 282.0,135.6 283.0,136.0 284.0,136.4 285.0,136.8 286.0,137.2 287.0,137.6 288.0,138.0 289.0,138.4 290.0,138.8 291.0,139.1 292.0,139.5 293.0,139.8 294.0,140.1 295.0,140.4 296.0,140.6 297.0,140.9 298.0,141.0 299.0,141.2 300.0,141.3 301.0,141.5 302.0,141.6 303.0,141.7 304.0,141.8 305.0,141.9 306.0,142.0 307.0,142.1 308.0,142.1 309.0,142.2 310.0,142.3 311.0,142.4 312.0,142.5 313.0,142.6 314.0,142.7 315.0,142.8 316.0,142.9 317.0,143.0 318.0,143.1 319.0,143.2 320.0,143.2 321.0,143.3 322.0,143.4 323.0,143.5 324.0,143.6 325.0,143.7 326.0,143.7 327.0,143.8 328.0,143.8 329.0,143.9 330.0,143.9 331.0,144.0 332.0,144.0 333.0,144.0 334.0,144.0 335.0,144.0 336.0,144.0 337.0,144.0 338.0,144.0 339.0,144.0 340.0,144.0 341.0,144.0 342.0,144.0 343.0,144.0 344.0,144.0 345.0,144.0 346.0,144.0 347.0,144.0 348.0,144.0 349.0,144.0 350.0,144.0 351.0,144.0 352.0,144.0 353.0,144.0 354.0,144.0 355.0,144.0 356.0,144.0 357.0,144.0 358.0,144.0 359.0,144.0 360.0,144.0 361.0,144.0 362.0,143.9 363.0,143.9 364.0,143.9 365.0,143.9 366.0,143.8 367.0,143.8 368.0,143.8 369.0,143.8 370.0,143.7 371.0,143.7 372.0,143.7 373.0,143.6 374.0,143.6 375.0,143.6 376.0,143.5 377.0,143.5 378.0,143.5 379.0,143.4 380.0,143.4 381.0,143.4 382.0,143.4 383.0,143.3 384.0,143.3 385.0,143.3 386.0,143.2 387.0,143.2 388.0,143.2 389.0,143.1 390.0,143.1 391.0,143.1 392.0,143.1 393.0,143.1 394.0,143.0 395.0,143.0 396.0,143.0 397.0,143.0 398.0,143.0 399.0,143.0 400.0,143.0 401.0,143.0 402.0,143.0 403.0,143.0 404.0,143.0 405.0,143.0 406.0,143.0 407.0,143.0 408.0,143.0 409.0,143.0 410.0,143.0 411.0,143.0 412.0,143.0 413.0,143.0 414.0,143.0 415.0,143.0 416.0,143.0 417.0,143.0 418.0,143.0 419.0,143.0 420.0,143.0 421.0,143.0 422.0,143.0 423.0,143.0 424.0,143.0 425.0,143.0 426.0,143.0 427.0,143.0 428.0,143.0 429.0,143.0 430.0,143.0 431.0,143.0 432.0,143.0 433.0,143.0 434.0,143.0 435.0,143.0 436.0,143.0 437.0,143.0 438.0,143.0 439.0,143.0 440.0,143.0 441.0,143.0 442.0,143.0 443.0,143.0 444.0,143.0 445.0,143.0 446.0,143.1 447.0,143.1 448.0,143.2 449.0,143.2 450.0,143.3 451.0,143.4 452.0,143.6 453.0,143.7 454.0,143.9 455.0,144.1 456.0,144.3 457.0,144.5 458.0,144.7 459.0,144.9 460.0,145.1 461.0,145.3 462.0,145.5 463.0,145.7 464.0,145.8 465.0,146.0 466.0,146.2 467.0,146.4 468.0,146.5 469.0,146.7 470.0,146.8 471.0,147.0 472.0,147.2 473.0,147.3 474.0,147.5 475.0,147.6 476.0,147.8 477.0,147.9 478.0,148.1 479.0,148.2 480.0,148.4 481.0,148.5 482.0,148.7 483.0,148.8 484.0,149.0 485.0,149.1 486.0,149.3 487.0,149.5 488.0,149.6 489.0,149.8 490.0,149.9 491.0,150.1 492.0,150.2 493.0,150.3 494.0,150.5 495.0,150.6 496.0,150.7 497.0,150.8 498.0,150.8 499.0,150.9 500.0,150.9 501.0,151.0 502.0,151.0 503.0,151.0 504.0,151.0 505.0,151.0 506.0,151.0 507.0,151.0 508.0,151.0 509.0,151.0 510.0,151.0 511.0,151.0 512.0,151.0 513.0,151.0 514.0,151.0 515.0,151.0 516.0,151.0 517.0,151.0 518.0,151.0 519.0,151.0 520.0,151.0 521.0,151.0 522.0,151.0 523.0,151.0 524.0,151.0 525.0,151.0 526.0,151.0 527.0,151.0 528.0,151.0 529.0,151.0 530.0,151.0 531.0,151.0 532.0,151.1 533.0,151.1 534.0,151.2 535.0,151.3 536.0,151.4 537.0,151.6 538.0,151.8 539.0,152.0 540.0,152.2 541.0,152.5 542.0,152.7 543.0,153.0 544.0,153.3 545.0,153.6 546.0,153.9 547.0,154.2 548.0,154.5 549.0,154.8 550.0,155.2 551.0,155.5 552.0,155.8 553.0,156.1 554.0,156.4 555.0,156.7 556.0,157.0 557.0,157.3 558.0,157.6 559.0,157.9 560.0,158.2 561.0,158.5 562.0,158.8 563.0,159.1 564.0,159.4 565.0,159.7 566.0,160.0 567.0,160.3 568.0,160.7 569.0,161.0 570.0,161.3 571.0,161.6 572.0,161.9 573.0,162.2 574.0,162.5 575.0,162.8 576.0,163.1 577.0,163.4 578.0,163.7 579.0,164.0 580.0,164.3 581.0,164.6 582.0,164.9 583.0,165.2 584.0,165.5 585.0,165.9 586.0,166.2 587.0,166.5 588.0,166.8 589.0,167.1 590.0,167.4 591.0,167.7 592.0,168.0 593.0,168.3 594.0,168.6 595.0,169.0 596.0,169.3 597.0,169.6 598.0,169.9 599.0,170.3 600.0,170.6 601.0,170.9 602.0,171.3 603.0,171.6 604.0,171.9 605.0,172.3 606.0,172.6 607.0,172.9 608.0,173.3 609.0,173.6 610.0,173.9 611.0,174.3 612.0,174.6 613.0,175.0 614.0,175.3 615.0,175.6 616.0,176.0 617.0,176.3 618.0,176.6 619.0,177.0 620.0,177.3 621.0,177.6 622.0,178.0 623.0,178.3 624.0,178.6 625.0,178.9 626.0,179.2 627.0,179.5 628.0,179.7 629.0,180.0 630.0,180.2 631.0,180.4 632.0,180.6 633.0,180.8 634.0,181.0 635.0,181.2 636.0,181.4 637.0,181.6 638.0,181.8 639.0,182.0 640.0,182.3 641.0,182.6 642.0,182.9 643.0,183.2 644.0,183.5 645.0,183.8 646.0,184.1 647.0,184.4 648.0,184.7 649.0,184.9 650.0,185.1 651.0,185.3 652.0,185.5 653.0,185.6 654.0,185.7 655.0,185.8 656.0,185.9 657.0,186.0 658.0,186.0 659.0,186.1 660.0,186.1 661.0,186.2 662.0,186.2 663.0,186.3 664.0,186.3 665.0,186.4 666.0,186.4 667.0,186.5 668.0,186.5 669.0,186.6 670.0,186.6 671.0,186.6 672.0,186.6 673.0,186.7 674.0,186.7 675.0,186.7 676.0,186.7 677.0,186.7 678.0,186.7 679.0,186.7 680.0,186.7 681.0,186.7 682.0,186.7 683.0,186.7 684.0,186.7 685.0,186.7 686.0,186.7 687.0,186.7 688.0,186.7 689.0,186.7 690.0,186.7 691.0,186.7 692.0,186.7 693.0,186.7 694.0,186.7 695.0,186.7 696.0,186.7 697.0,186.7 698.0,186.6 699.0,186.6 700.0,186.6 701.0,186.5 702.0,186.4 703.0,186.3 704.0,186.2 705.0,186.0 706.0,185.8 707.0,185.7 708.0,185.5 709.0,185.3 710.0,185.1 711.0,184.9 712.0,184.7 713.0,184.5 714.0,184.3 715.0,184.1 716.0,183.9 717.0,183.7 718.0,183.5 719.0,183.3 720.0,183.1 721.0,182.9 722.0,182.7 723.0,182.5 724.0,182.3 725.0,182.1 726.0,181.9 727.0,181.7 728.0,181.5 729.0,181.3 730.0,181.1 731.0,180.9 732.0,180.7 733.0,180.5 734.0,180.3 735.0,180.1 736.0,179.9 737.0,179.7 738.0,179.5 739.0,179.3 740.0,179.1 741.0,178.9 742.0,178.7 743.0,178.6 744.0,178.4 745.0,178.2 746.0,178.0 747.0,177.9 748.0,177.7 749.0,177.6 750.0,177.4 751.0,177.3 752.0,177.1 753.0,177.0 754.0,176.8 755.0,176.7 756.0,176.5 757.0,176.4 758.0,176.2 759.0,176.1 760.0,175.9 761.0,175.8 762.0,175.6 763.0,175.5 764.0,175.3 765.0,175.2 766.0,175.0 767.0,174.9 768.0,174.7 769.0,174.6 770.0,174.4 771.0,174.3 772.0,174.1 773.0,174.0 774.0,173.8 775.0,173.7 776.0,173.5 777.0,173.4 778.0,173.2 779.0,173.1 780.0,172.9 781.0,172.8 782.0,172.6 783.0,172.5 784.0,172.3 785.0,172.2 786.0,172.1 787.0,172.0 788.0,171.8 789.0,171.7 790.0,171.6 791.0,171.5 792.0,171.4 793.0,171.3 794.0,171.2 795.0,171.1 796.0,171.0 797.0,170.9 798.0,170.8 799.0,170.7 800.0,170.6 801.0,170.5 802.0,170.4 803.0,170.3 804.0,170.2 805.0,170.1 806.0,170.0 807.0,170.0 808.0,169.9 809.0,169.8 810.0,169.7 811.0,169.6 812.0,169.5 813.0,169.3 814.0,169.2 815.0,169.1 816.0,169.0 817.0,168.8 818.0,168.7 819.0,168.5 820.0,168.3 821.0,168.2 822.0,168.0 823.0,167.8 824.0,167.6 825.0,167.4 826.0,167.2 827.0,167.0 828.0,166.8 829.0,166.6 830.0,166.4 831.0,166.2 832.0,166.0 833.0,165.8 834.0,165.7 835.0,165.5 836.0,165.3 837.0,165.2 838.0,165.1 839.0,165.0 840.0,164.9 841.0,164.9 842.0,164.9 843.0,164.8 844.0,164.8 845.0,164.8 846.0,164.8 847.0,164.8 848.0,164.8 849.0,164.8 850.0,164.8 851.0,164.8 852.0,164.8 853.0,164.8 854.0,164.8 855.0,164.8 856.0,164.8 857.0,164.8 858.0,164.8 859.0,164.8 860.0,164.8" fill="none" stroke="#a82a2a" stroke-width="1.7"/><polyline points="12.0,93.8 13.0,93.8 14.0,93.7 15.0,93.6 16.0,93.6 17.0,93.5 18.0,93.4 19.0,93.3 20.0,93.2 21.0,93.1 22.0,93.0 23.0,92.9 24.0,92.8 25.0,92.7 26.0,92.5 27.0,92.4 28.0,92.3 29.0,92.1 30.0,91.9 31.0,91.7 32.0,91.5 33.0,91.3 34.0,91.0 35.0,90.7 36.0,90.4 37.0,90.1 38.0,89.8 39.0,89.4 40.0,89.1 41.0,88.7 42.0,88.4 43.0,88.0 44.0,87.7 45.0,87.3 46.0,87.0 47.0,86.6 48.0,86.3 49.0,85.9 50.0,85.6 51.0,85.2 52.0,84.9 53.0,84.5 54.0,84.2 55.0,83.8 56.0,83.4 57.0,83.0 58.0,82.6 59.0,82.3 60.0,81.9 61.0,81.5 62.0,81.1 63.0,80.7 64.0,80.3 65.0,79.9 66.0,79.5 67.0,79.1 68.0,78.7 69.0,78.3 70.0,78.0 71.0,77.6 72.0,77.2 73.0,76.9 74.0,76.6 75.0,76.3 76.0,76.1 77.0,75.9 78.0,75.8 79.0,75.7 80.0,75.7 81.0,75.7 82.0,75.8 83.0,75.9 84.0,76.0 85.0,76.2 86.0,76.3 87.0,76.5 88.0,76.7 89.0,76.9 90.0,77.2 91.0,77.4 92.0,77.7 93.0,78.0 94.0,78.3 95.0,78.6 96.0,79.0 97.0,79.3 98.0,79.6 99.0,80.0 100.0,80.4 101.0,80.7 102.0,81.1 103.0,81.4 104.0,81.8 105.0,82.2 106.0,82.5 107.0,82.9 108.0,83.3 109.0,83.7 110.0,84.1 111.0,84.5 112.0,84.9 113.0,85.3 114.0,85.8 115.0,86.2 116.0,86.7 117.0,87.1 118.0,87.6 119.0,88.1 120.0,88.6 121.0,89.0 122.0,89.6 123.0,90.1 124.0,90.6 125.0,91.2 126.0,91.7 127.0,92.3 128.0,92.9 129.0,93.5 130.0,94.1 131.0,94.7 132.0,95.3 133.0,95.9 134.0,96.5 135.0,97.1 136.0,97.7 137.0,98.4 138.0,99.0 139.0,99.6 140.0,100.2 141.0,100.8 142.0,101.5 143.0,102.1 144.0,102.7 145.0,103.4 146.0,104.1 147.0,104.7 148.0,105.4 149.0,106.1 150.0,106.7 151.0,107.4 152.0,108.1 153.0,108.7 154.0,109.4 155.0,110.0 156.0,110.7 157.0,111.3 158.0,111.9 159.0,112.4 160.0,113.0 161.0,113.5 162.0,114.0 163.0,114.5 164.0,115.0 165.0,115.4 166.0,115.8 167.0,116.3 168.0,116.7 169.0,117.1 170.0,117.5 171.0,117.9 172.0,118.2 173.0,118.6 174.0,118.8 175.0,119.1 176.0,119.3 177.0,119.4 178.0,119.5 179.0,119.5 180.0,119.5 181.0,119.5 182.0,119.5 183.0,119.5 184.0,119.5 185.0,119.5 186.0,119.5 187.0,119.6 188.0,119.7 189.0,119.9 190.0,120.1 191.0,120.4 192.0,120.7 193.0,121.1 194.0,121.5 195.0,121.9 196.0,122.3 197.0,122.8 198.0,123.2 199.0,123.7 200.0,124.1 201.0,124.6 202.0,125.0 203.0,125.5 204.0,125.9 205.0,126.3 206.0,126.7 207.0,127.1 208.0,127.5 209.0,127.8 210.0,128.1 211.0,128.4 212.0,128.7 213.0,128.9 214.0,129.2 215.0,129.4 216.0,129.6 217.0,129.8 218.0,130.0 219.0,130.2 220.0,130.5 221.0,130.7 222.0,130.9 223.0,131.1 224.0,131.3 225.0,131.5 226.0,131.7 227.0,132.0 228.0,132.2 229.0,132.5 230.0,132.7 231.0,133.0 232.0,133.3 233.0,133.7 234.0,134.0 235.0,134.4 236.0,134.8 237.0,135.2 238.0,135.6 239.0,136.0 240.0,136.4 241.0,136.8 242.0,137.2 243.0,137.7 244.0,138.1 245.0,138.5 246.0,138.9 247.0,139.4 248.0,139.8 249.0,140.2 250.0,140.6 251.0,141.0 252.0,141.5 253.0,141.9 254.0,142.3 255.0,142.7 256.0,143.2 257.0,143.6 258.0,144.0 259.0,144.5 260.0,145.0 261.0,145.4 262.0,145.9 263.0,146.4 264.0,147.0 265.0,147.5 266.0,148.1 267.0,148.7 268.0,149.3 269.0,149.9 270.0,150.5 271.0,151.1 272.0,151.7 273.0,152.3 274.0,152.9 275.0,153.5 276.0,154.1 277.0,154.7 278.0,155.3 279.0,156.0 280.0,156.6 281.0,157.2 282.0,157.8 283.0,158.3 284.0,158.9 285.0,159.4 286.0,159.9 287.0,160.4 288.0,160.8 289.0,161.1 290.0,161.3 291.0,161.6 292.0,161.7 293.0,161.8 294.0,161.9 295.0,161.9 296.0,162.0 297.0,161.9 298.0,161.9 299.0,161.9 300.0,161.8 301.0,161.7 302.0,161.6 303.0,161.5 304.0,161.3 305.0,161.1 306.0,160.9 307.0,160.7 308.0,160.5 309.0,160.2 310.0,160.0 311.0,159.7 312.0,159.5 313.0,159.2 314.0,159.0 315.0,158.7 316.0,158.5 317.0,158.3 318.0,158.1 319.0,158.0 320.0,157.9 321.0,157.9 322.0,157.9 323.0,158.0 324.0,158.1 325.0,158.3 326.0,158.5 327.0,158.7 328.0,158.9 329.0,159.2 330.0,159.4 331.0,159.7 332.0,159.8 333.0,160.0 334.0,160.1 335.0,160.1 336.0,160.1 337.0,160.0 338.0,159.9 339.0,159.7 340.0,159.5 341.0,159.3 342.0,159.0 343.0,158.8 344.0,158.5 345.0,158.2 346.0,158.0 347.0,157.7 348.0,157.4 349.0,157.2 350.0,156.9 351.0,156.6 352.0,156.4 353.0,156.1 354.0,155.8 355.0,155.6 356.0,155.3 357.0,155.0 358.0,154.7 359.0,154.5 360.0,154.2 361.0,153.9 362.0,153.6 363.0,153.2 364.0,152.9 365.0,152.6 366.0,152.3 367.0,151.9 368.0,151.6 369.0,151.3 370.0,150.9 371.0,150.6 372.0,150.3 373.0,149.9 374.0,149.6 375.0,149.3 376.0,148.9 377.0,148.6 378.0,148.3 379.0,147.9 380.0,147.6 381.0,147.3 382.0,146.9 383.0,146.6 384.0,146.3 385.0,145.9 386.0,145.6 387.0,145.3 388.0,145.0 389.0,144.7 390.0,144.4 391.0,144.1 392.0,143.9 393.0,143.7 394.0,143.5 395.0,143.4 396.0,143.3 397.0,143.3 398.0,143.2 399.0,143.2 400.0,143.2 401.0,143.2 402.0,143.3 403.0,143.3 404.0,143.3 405.0,143.3 406.0,143.4 407.0,143.4 408.0,143.4 409.0,143.5 410.0,143.5 411.0,143.5 412.0,143.6 413.0,143.6 414.0,143.6 415.0,143.7 416.0,143.7 417.0,143.7 418.0,143.7 419.0,143.8 420.0,143.8 421.0,143.8 422.0,143.9 423.0,143.9 424.0,143.9 425.0,143.9 426.0,143.9 427.0,144.0 428.0,144.0 429.0,144.0 430.0,144.0 431.0,144.0 432.0,144.0 433.0,144.0 434.0,144.0 435.0,144.0 436.0,144.0 437.0,144.0 438.0,144.0 439.0,144.0 440.0,144.0 441.0,144.0 442.0,144.0 443.0,144.0 444.0,144.0 445.0,144.0 446.0,144.1 447.0,144.1 448.0,144.2 449.0,144.3 450.0,144.4 451.0,144.6 452.0,144.8 453.0,145.0 454.0,145.2 455.0,145.4 456.0,145.7 457.0,146.0 458.0,146.2 459.0,146.5 460.0,146.8 461.0,147.1 462.0,147.4 463.0,147.7 464.0,148.0 465.0,148.3 466.0,148.6 467.0,149.0 468.0,149.3 469.0,149.6 470.0,150.0 471.0,150.3 472.0,150.7 473.0,151.0 474.0,151.4 475.0,151.7 476.0,152.1 477.0,152.4 478.0,152.8 479.0,153.1 480.0,153.4 481.0,153.8 482.0,154.1 483.0,154.4 484.0,154.7 485.0,155.0 486.0,155.3 487.0,155.6 488.0,155.8 489.0,156.0 490.0,156.2 491.0,156.3 492.0,156.5 493.0,156.6 494.0,156.8 495.0,156.9 496.0,157.0 497.0,157.1 498.0,157.2 499.0,157.3 500.0,157.5 501.0,157.6 502.0,157.7 503.0,157.8 504.0,157.9 505.0,158.0 506.0,158.1 507.0,158.2 508.0,158.3 509.0,158.4 510.0,158.5 511.0,158.6 512.0,158.6 513.0,158.7 514.0,158.7 515.0,158.7 516.0,158.7 517.0,158.6 518.0,158.6 519.0,158.5 520.0,158.4 521.0,158.3 522.0,158.3 523.0,158.2 524.0,158.1 525.0,158.0 526.0,157.9 527.0,157.8 528.0,157.7 529.0,157.7 530.0,157.6 531.0,157.6 532.0,157.6 533.0,157.6 534.0,157.7 535.0,157.8 536.0,158.0 537.0,158.3 538.0,158.6 539.0,159.0 540.0,159.5 541.0,160.0 542.0,160.5 543.0,161.1 544.0,161.7 545.0,162.3 546.0,162.9 547.0,163.5 548.0,164.1 549.0,164.6 550.0,165.2 551.0,165.8 552.0,166.3 553.0,166.8 554.0,167.3 555.0,167.7 556.0,168.2 557.0,168.6 558.0,169.0 559.0,169.4 560.0,169.8 561.0,170.2 562.0,170.5 563.0,170.9 564.0,171.3 565.0,171.7 566.0,172.1 567.0,172.5 568.0,172.8 569.0,173.2 570.0,173.6 571.0,174.0 572.0,174.4 573.0,174.7 574.0,175.1 575.0,175.5 576.0,175.9 577.0,176.3 578.0,176.6 579.0,177.0 580.0,177.4 581.0,177.8 582.0,178.1 583.0,178.5 584.0,178.9 585.0,179.2 586.0,179.6 587.0,180.0 588.0,180.3 589.0,180.7 590.0,181.1 591.0,181.4 592.0,181.8 593.0,182.2 594.0,182.5 595.0,182.9 596.0,183.3 597.0,183.6 598.0,184.0 599.0,184.4 600.0,184.7 601.0,185.1 602.0,185.5 603.0,185.8 604.0,186.2 605.0,186.6 606.0,186.9 607.0,187.3 608.0,187.7 609.0,188.1 610.0,188.5 611.0,188.9 612.0,189.3 613.0,189.7 614.0,190.1 615.0,190.6 616.0,191.0 617.0,191.4 618.0,191.9 619.0,192.4 620.0,192.8 621.0,193.3 622.0,193.7 623.0,194.2 624.0,194.7 625.0,195.1 626.0,195.6 627.0,196.1 628.0,196.5 629.0,197.0 630.0,197.5 631.0,198.0 632.0,198.5 633.0,199.0 634.0,199.6 635.0,200.1 636.0,200.7 637.0,201.2 638.0,201.8 639.0,202.3 640.0,202.9 641.0,203.4 642.0,204.0 643.0,204.5 644.0,205.1 645.0,205.6 646.0,206.0 647.0,206.4 648.0,206.8 649.0,207.1 650.0,207.3 651.0,207.5 652.0,207.5 653.0,207.5 654.0,207.5 655.0,207.4 656.0,207.3 657.0,207.1 658.0,207.0 659.0,206.8 660.0,206.7 661.0,206.5 662.0,206.4 663.0,206.3 664.0,206.1 665.0,206.0 666.0,205.9 667.0,205.8 668.0,205.7 669.0,205.6 670.0,205.5 671.0,205.5 672.0,205.4 673.0,205.3 674.0,205.2 675.0,205.0 676.0,204.9 677.0,204.8 678.0,204.6 679.0,204.5 680.0,204.2 681.0,204.0 682.0,203.7 683.0,203.3 684.0,202.9 685.0,202.5 686.0,202.0 687.0,201.5 688.0,200.9 689.0,200.4 690.0,199.8 691.0,199.3 692.0,198.7 693.0,198.1 694.0,197.6 695.0,197.0 696.0,196.4 697.0,195.8 698.0,195.3 699.0,194.7 700.0,194.1 701.0,193.5 702.0,192.9 703.0,192.3 704.0,191.6 705.0,191.0 706.0,190.4 707.0,189.7 708.0,189.1 709.0,188.5 710.0,187.8 711.0,187.2 712.0,186.5 713.0,185.9 714.0,185.2 715.0,184.6 716.0,183.9 717.0,183.3 718.0,182.7 719.0,182.1 720.0,181.5 721.0,181.0 722.0,180.4 723.0,179.9 724.0,179.5 725.0,179.0 726.0,178.7 727.0,178.3 728.0,177.9 729.0,177.6 730.0,177.3 731.0,177.0 732.0,176.7 733.0,176.4 734.0,176.0 735.0,175.7 736.0,175.4 737.0,175.1 738.0,174.8 739.0,174.5 740.0,174.2 741.0,173.9 742.0,173.5 743.0,173.2 744.0,172.9 745.0,172.5 746.0,172.2 747.0,171.8 748.0,171.4 749.0,171.0 750.0,170.6 751.0,170.3 752.0,169.9 753.0,169.5 754.0,169.1 755.0,168.7 756.0,168.3 757.0,167.9 758.0,167.5 759.0,167.2 760.0,166.8 761.0,166.4 762.0,166.1 763.0,165.8 764.0,165.5 765.0,165.3 766.0,165.0 767.0,164.8 768.0,164.6 769.0,164.5 770.0,164.3 771.0,164.2 772.0,164.1 773.0,164.0 774.0,163.9 775.0,163.8 776.0,163.7 777.0,163.6 778.0,163.5 779.0,163.4 780.0,163.3 781.0,163.2 782.0,163.1 783.0,163.0 784.0,162.9 785.0,162.7 786.0,162.6 787.0,162.5 788.0,162.4 789.0,162.2 790.0,162.1 791.0,162.0 792.0,161.8 793.0,161.7 794.0,161.5 795.0,161.4 796.0,161.2 797.0,161.1 798.0,160.9 799.0,160.8 800.0,160.6 801.0,160.5 802.0,160.3 803.0,160.2 804.0,160.0 805.0,159.8 806.0,159.7 807.0,159.5 808.0,159.3 809.0,159.1 810.0,158.9 811.0,158.7 812.0,158.5 813.0,158.3 814.0,158.1 815.0,157.9 816.0,157.7 817.0,157.5 818.0,157.3 819.0,157.1 820.0,156.9 821.0,156.7 822.0,156.5 823.0,156.3 824.0,156.1 825.0,155.9 826.0,155.7 827.0,155.6 828.0,155.4 829.0,155.3 830.0,155.2 831.0,155.1 832.0,155.0 833.0,154.9 834.0,154.9 835.0,154.8 836.0,154.8 837.0,154.8 838.0,154.9 839.0,154.9 840.0,155.0 841.0,155.2 842.0,155.3 843.0,155.5 844.0,155.7 845.0,155.9 846.0,156.2 847.0,156.4 848.0,156.7 849.0,157.0 850.0,157.3 851.0,157.6 852.0,157.9 853.0,158.2 854.0,158.5 855.0,158.8 856.0,159.1 857.0,159.4 858.0,159.7 859.0,159.9 860.0,160.1" fill="none" stroke="#1818c8" stroke-width="1.5"/><rect x="12" y="142" width="876" height="2" fill="#a82828"/><rect x="12" y="170.6" width="876" height="1.7" fill="#dcdde0"/><rect x="12" y="188" width="876" height="2" fill="#3cc83c"/><text x="13" y="50" font-size="10.5" fill="#e01818" textLength="135" lengthAdjust="spacingAndGlyphs">Exponential_Moving_Average</text><text x="151" y="50" font-size="10.5" fill="#1a1ae0" textLength="135" lengthAdjust="spacingAndGlyphs">Exponential_Moving_Average</text><rect x="12" y="38" width="31" height="22" fill="#f2f2f2"/><rect x="12" y="38" width="31" height="4" fill="#d4d4d4"/><rect x="16.5" y="46.5" width="9" height="9" rx="1.5" fill="url(#lgr)" stroke="#a81c24"/><rect x="29.5" y="46.5" width="9" height="9" rx="1.5" fill="url(#lgb)" stroke="#1a5e9e"/><path d="M15.5 284 V286 M20.5 284 V286 M24.5 284 V287 M29.5 284 V287 M33.5 284 V286 M37.5 284 V286 M42.5 284 V282 M46.5 284 V282 M51.5 284 V281 M55.5 284 V281 M60.5 284 V280 M64.5 284 V281 M69.5 284 V281 M73.5 284 V281 M78.5 284 V282 M82.5 284 V282 M87.5 284 V286 M91.5 284 V288 M96.5 284 V290 M100.5 284 V291 M105.5 284 V292 M109.5 284 V293 M114.5 284 V295 M118.5 284 V298 M122.5 284 V300 M127.5 284 V301 M131.5 284 V302 M136.5 284 V301 M140.5 284 V300 M145.5 284 V299 M149.5 284 V298 M154.5 284 V298 M158.5 284 V297 M163.5 284 V295 M167.5 284 V292 M172.5 284 V288 M176.5 284 V282 M181.5 284 V280 M185.5 284 V279 M190.5 284 V278 M194.5 284 V280 M199.5 284 V282 M203.5 284 V282 M208.5 284 V282 M212.5 284 V286 M216.5 284 V286 M221.5 284 V286 M225.5 284 V286 M230.5 284 V282 M234.5 284 V282 M239.5 284 V282 M243.5 284 V282 M248.5 284 V286 M252.5 284 V289 M257.5 284 V291 M261.5 284 V293 M266.5 284 V293 M270.5 284 V293 M275.5 284 V293 M279.5 284 V291 M284.5 284 V288 M288.5 284 V286 M293.5 284 V282 M297.5 284 V280 M302.5 284 V277 M306.5 284 V275 M310.5 284 V273 M315.5 284 V272 M319.5 284 V271 M324.5 284 V272 M328.5 284 V275 M333.5 284 V278 M337.5 284 V280 M342.5 284 V281 M346.5 284 V280 M351.5 284 V279 M355.5 284 V278 M360.5 284 V276 M364.5 284 V276 M369.5 284 V276 M373.5 284 V276 M378.5 284 V276 M382.5 284 V276 M387.5 284 V277 M391.5 284 V278 M395.5 284 V279 M400.5 284 V280 M404.5 284 V282 M409.5 284 V286 M413.5 284 V286 M418.5 284 V287 M422.5 284 V289 M427.5 284 V290 M431.5 284 V290 M436.5 284 V290 M440.5 284 V289 M445.5 284 V287 M449.5 284 V286 M454.5 284 V286 M458.5 284 V287 M463.5 284 V289 M467.5 284 V291 M472.5 284 V292 M476.5 284 V293 M480.5 284 V294 M485.5 284 V294 M489.5 284 V293 M494.5 284 V290 M498.5 284 V289 M503.5 284 V288 M507.5 284 V287 M512.5 284 V286 M516.5 284 V286 M521.5 284 V286 M525.5 284 V282 M530.5 284 V282 M534.5 284 V282 M539.5 284 V286 M543.5 284 V286 M548.5 284 V288 M552.5 284 V290 M557.5 284 V290 M561.5 284 V289 M566.5 284 V288 M570.5 284 V289 M574.5 284 V291 M579.5 284 V291 M583.5 284 V290 M588.5 284 V290 M592.5 284 V290 M597.5 284 V290 M601.5 284 V289 M606.5 284 V287 M610.5 284 V286 M615.5 284 V286 M619.5 284 V286 M624.5 284 V287 M628.5 284 V289 M633.5 284 V290 M637.5 284 V291 M642.5 284 V290 M646.5 284 V288 M651.5 284 V286 M655.5 284 V282 M660.5 284 V279 M664.5 284 V275 M668.5 284 V274 M673.5 284 V273 M677.5 284 V272 M682.5 284 V272 M686.5 284 V271 M691.5 284 V271 M695.5 284 V271 M700.5 284 V271 M704.5 284 V271 M709.5 284 V270 M713.5 284 V269 M718.5 284 V268 M722.5 284 V269 M727.5 284 V271 M731.5 284 V273 M736.5 284 V276 M740.5 284 V278 M745.5 284 V280 M749.5 284 V281 M753.5 284 V282 M758.5 284 V282 M762.5 284 V286 M767.5 284 V286 M771.5 284 V286 M776.5 284 V287 M780.5 284 V288 M785.5 284 V289 M789.5 284 V289 M794.5 284 V289 M798.5 284 V289 M803.5 284 V288 M807.5 284 V287 M812.5 284 V287 M816.5 284 V287 M821.5 284 V287 M825.5 284 V287 M830.5 284 V286 M834.5 284 V286 M838.5 284 V286 M843.5 284 V286 M847.5 284 V289 M852.5 284 V291 M856.5 284 V293 M861.5 284 V294" stroke="#ac282e" stroke-width="2" fill="none"/><polyline points="12.0,269.1 13.0,269.3 14.0,269.5 15.0,269.8 16.0,270.1 17.0,270.4 18.0,270.7 19.0,271.0 20.0,271.2 21.0,271.5 22.0,271.7 23.0,271.8 24.0,272.0 25.0,272.0 26.0,272.1 27.0,272.1 28.0,272.1 29.0,272.1 30.0,272.0 31.0,272.0 32.0,271.8 33.0,271.7 34.0,271.4 35.0,271.2 36.0,270.9 37.0,270.5 38.0,270.2 39.0,269.8 40.0,269.5 41.0,269.1 42.0,268.8 43.0,268.5 44.0,268.1 45.0,267.9 46.0,267.6 47.0,267.3 48.0,267.0 49.0,266.8 50.0,266.5 51.0,266.3 52.0,266.0 53.0,265.8 54.0,265.5 55.0,265.3 56.0,265.1 57.0,264.9 58.0,264.7 59.0,264.5 60.0,264.3 61.0,264.2 62.0,264.1 63.0,264.0 64.0,263.9 65.0,263.8 66.0,263.7 67.0,263.6 68.0,263.6 69.0,263.5 70.0,263.4 71.0,263.4 72.0,263.4 73.0,263.4 74.0,263.5 75.0,263.6 76.0,263.8 77.0,264.0 78.0,264.3 79.0,264.6 80.0,265.0 81.0,265.4 82.0,265.9 83.0,266.4 84.0,267.0 85.0,267.6 86.0,268.3 87.0,268.9 88.0,269.6 89.0,270.3 90.0,271.0 91.0,271.7 92.0,272.4 93.0,273.1 94.0,273.7 95.0,274.4 96.0,275.0 97.0,275.7 98.0,276.3 99.0,276.9 100.0,277.5 101.0,278.0 102.0,278.6 103.0,279.2 104.0,279.8 105.0,280.4 106.0,281.0 107.0,281.6 108.0,282.2 109.0,282.9 110.0,283.6 111.0,284.4 112.0,285.2 113.0,286.1 114.0,287.0 115.0,287.9 116.0,288.9 117.0,289.9 118.0,290.9 119.0,291.9 120.0,292.9 121.0,293.8 122.0,294.8 123.0,295.7 124.0,296.6 125.0,297.5 126.0,298.3 127.0,299.1 128.0,299.9 129.0,300.6 130.0,301.4 131.0,302.1 132.0,302.8 133.0,303.5 134.0,304.1 135.0,304.8 136.0,305.4 137.0,305.9 138.0,306.5 139.0,307.0 140.0,307.5 141.0,308.0 142.0,308.5 143.0,309.0 144.0,309.5 145.0,310.0 146.0,310.6 147.0,311.1 148.0,311.7 149.0,312.3 150.0,312.8 151.0,313.5 152.0,314.1 153.0,314.7 154.0,315.2 155.0,315.8 156.0,316.3 157.0,316.7 158.0,317.0 159.0,317.3 160.0,317.5 161.0,317.6 162.0,317.6 163.0,317.7 164.0,317.6 165.0,317.5 166.0,317.4 167.0,317.1 168.0,316.8 169.0,316.3 170.0,315.8 171.0,315.1 172.0,314.3 173.0,313.5 174.0,312.7 175.0,311.8 176.0,311.0 177.0,310.2 178.0,309.4 179.0,308.6 180.0,307.9 181.0,307.2 182.0,306.6 183.0,305.9 184.0,305.3 185.0,304.7 186.0,304.2 187.0,303.7 188.0,303.4 189.0,303.1 190.0,303.0 191.0,302.9 192.0,303.0 193.0,303.2 194.0,303.3 195.0,303.6 196.0,303.8 197.0,304.0 198.0,304.2 199.0,304.3 200.0,304.5 201.0,304.5 202.0,304.6 203.0,304.6 204.0,304.7 205.0,304.7 206.0,304.7 207.0,304.7 208.0,304.7 209.0,304.8 210.0,304.8 211.0,304.9 212.0,305.0 213.0,305.1 214.0,305.2 215.0,305.3 216.0,305.4 217.0,305.5 218.0,305.6 219.0,305.6 220.0,305.6 221.0,305.5 222.0,305.4 223.0,305.2 224.0,305.0 225.0,304.8 226.0,304.6 227.0,304.3 228.0,304.1 229.0,303.8 230.0,303.6 231.0,303.3 232.0,303.1 233.0,302.9 234.0,302.8 235.0,302.7 236.0,302.7 237.0,302.7 238.0,302.8 239.0,302.9 240.0,303.1 241.0,303.4 242.0,303.6 243.0,303.9 244.0,304.3 245.0,304.6 246.0,305.1 247.0,305.6 248.0,306.2 249.0,306.8 250.0,307.5 251.0,308.2 252.0,308.9 253.0,309.6 254.0,310.3 255.0,311.0 256.0,311.6 257.0,312.2 258.0,312.7 259.0,313.1 260.0,313.6 261.0,314.0 262.0,314.3 263.0,314.7 264.0,315.1 265.0,315.4 266.0,315.8 267.0,316.1 268.0,316.5 269.0,316.9 270.0,317.2 271.0,317.5 272.0,317.8 273.0,318.0 274.0,318.2 275.0,318.3 276.0,318.2 277.0,318.1 278.0,318.0 279.0,317.8 280.0,317.5 281.0,317.2 282.0,316.9 283.0,316.6 284.0,316.3 285.0,315.9 286.0,315.5 287.0,315.0 288.0,314.5 289.0,313.8 290.0,313.1 291.0,312.4 292.0,311.6 293.0,310.7 294.0,309.9 295.0,309.0 296.0,308.2 297.0,307.3 298.0,306.5 299.0,305.7 300.0,304.9 301.0,304.1 302.0,303.3 303.0,302.5 304.0,301.7 305.0,301.0 306.0,300.2 307.0,299.4 308.0,298.7 309.0,297.9 310.0,297.2 311.0,296.5 312.0,295.8 313.0,295.1 314.0,294.5 315.0,293.8 316.0,293.2 317.0,292.6 318.0,292.1 319.0,291.5 320.0,291.0 321.0,290.6 322.0,290.2 323.0,289.9 324.0,289.7 325.0,289.6 326.0,289.6 327.0,289.7 328.0,289.8 329.0,289.9 330.0,290.0 331.0,290.2 332.0,290.3 333.0,290.4 334.0,290.4 335.0,290.4 336.0,290.3 337.0,290.2 338.0,290.0 339.0,289.8 340.0,289.5 341.0,289.2 342.0,288.9 343.0,288.5 344.0,288.2 345.0,287.8 346.0,287.5 347.0,287.1 348.0,286.7 349.0,286.3 350.0,285.9 351.0,285.4 352.0,285.0 353.0,284.5 354.0,284.0 355.0,283.5 356.0,283.0 357.0,282.5 358.0,282.0 359.0,281.5 360.0,281.0 361.0,280.6 362.0,280.1 363.0,279.7 364.0,279.2 365.0,278.8 366.0,278.4 367.0,278.0 368.0,277.6 369.0,277.2 370.0,276.8 371.0,276.4 372.0,276.0 373.0,275.6 374.0,275.2 375.0,274.9 376.0,274.5 377.0,274.2 378.0,273.9 379.0,273.6 380.0,273.3 381.0,273.0 382.0,272.7 383.0,272.4 384.0,272.1 385.0,271.8 386.0,271.6 387.0,271.4 388.0,271.2 389.0,271.1 390.0,271.0 391.0,270.9 392.0,270.9 393.0,270.8 394.0,270.8 395.0,270.8 396.0,270.8 397.0,270.9 398.0,270.9 399.0,271.0 400.0,271.1 401.0,271.3 402.0,271.5 403.0,271.8 404.0,272.1 405.0,272.4 406.0,272.8 407.0,273.2 408.0,273.6 409.0,274.0 410.0,274.4 411.0,274.8 412.0,275.2 413.0,275.6 414.0,276.1 415.0,276.5 416.0,277.0 417.0,277.5 418.0,278.0 419.0,278.5 420.0,279.0 421.0,279.5 422.0,279.9 423.0,280.4 424.0,280.9 425.0,281.3 426.0,281.6 427.0,281.9 428.0,282.2 429.0,282.3 430.0,282.4 431.0,282.5 432.0,282.5 433.0,282.5 434.0,282.5 435.0,282.5 436.0,282.5 437.0,282.5 438.0,282.5 439.0,282.4 440.0,282.3 441.0,282.2 442.0,282.1 443.0,281.9 444.0,281.8 445.0,281.6 446.0,281.4 447.0,281.2 448.0,281.0 449.0,280.9 450.0,280.8 451.0,280.7 452.0,280.8 453.0,280.9 454.0,281.2 455.0,281.6 456.0,282.1 457.0,282.7 458.0,283.3 459.0,284.0 460.0,284.7 461.0,285.4 462.0,286.1 463.0,286.8 464.0,287.4 465.0,288.1 466.0,288.7 467.0,289.3 468.0,289.8 469.0,290.4 470.0,290.9 471.0,291.4 472.0,291.9 473.0,292.4 474.0,292.9 475.0,293.4 476.0,293.9 477.0,294.4 478.0,294.8 479.0,295.3 480.0,295.7 481.0,296.1 482.0,296.4 483.0,296.7 484.0,297.0 485.0,297.3 486.0,297.4 487.0,297.5 488.0,297.5 489.0,297.4 490.0,297.3 491.0,297.1 492.0,296.9 493.0,296.7 494.0,296.5 495.0,296.2 496.0,296.0 497.0,295.9 498.0,295.7 499.0,295.5 500.0,295.4 501.0,295.3 502.0,295.2 503.0,295.1 504.0,295.0 505.0,294.9 506.0,294.9 507.0,294.8 508.0,294.7 509.0,294.6 510.0,294.5 511.0,294.3 512.0,294.2 513.0,294.0 514.0,293.7 515.0,293.5 516.0,293.2 517.0,292.9 518.0,292.5 519.0,292.2 520.0,291.8 521.0,291.5 522.0,291.1 523.0,290.7 524.0,290.4 525.0,290.0 526.0,289.7 527.0,289.4 528.0,289.1 529.0,288.9 530.0,288.7 531.0,288.6 532.0,288.7 533.0,288.8 534.0,289.0 535.0,289.3 536.0,289.7 537.0,290.0 538.0,290.4 539.0,290.8 540.0,291.2 541.0,291.7 542.0,292.1 543.0,292.6 544.0,293.0 545.0,293.6 546.0,294.1 547.0,294.7 548.0,295.3 549.0,295.9 550.0,296.5 551.0,297.0 552.0,297.6 553.0,298.0 554.0,298.4 555.0,298.8 556.0,299.0 557.0,299.1 558.0,299.2 559.0,299.2 560.0,299.2 561.0,299.2 562.0,299.3 563.0,299.3 564.0,299.5 565.0,299.7 566.0,300.1 567.0,300.5 568.0,301.0 569.0,301.6 570.0,302.2 571.0,302.8 572.0,303.5 573.0,304.0 574.0,304.6 575.0,305.0 576.0,305.4 577.0,305.7 578.0,306.0 579.0,306.1 580.0,306.3 581.0,306.4 582.0,306.5 583.0,306.6 584.0,306.7 585.0,306.9 586.0,307.0 587.0,307.2 588.0,307.5 589.0,307.7 590.0,308.0 591.0,308.3 592.0,308.5 593.0,308.8 594.0,309.0 595.0,309.2 596.0,309.4 597.0,309.5 598.0,309.5 599.0,309.5 600.0,309.5 601.0,309.4 602.0,309.4 603.0,309.3 604.0,309.2 605.0,309.1 606.0,309.0 607.0,308.9 608.0,308.7 609.0,308.6 610.0,308.5 611.0,308.5 612.0,308.4 613.0,308.5 614.0,308.6 615.0,308.8 616.0,309.0 617.0,309.3 618.0,309.6 619.0,310.0 620.0,310.3 621.0,310.7 622.0,311.1 623.0,311.4 624.0,311.8 625.0,312.2 626.0,312.6 627.0,313.0 628.0,313.4 629.0,313.8 630.0,314.2 631.0,314.7 632.0,315.1 633.0,315.6 634.0,316.0 635.0,316.4 636.0,316.7 637.0,317.0 638.0,317.1 639.0,317.2 640.0,317.2 641.0,317.0 642.0,316.7 643.0,316.4 644.0,316.0 645.0,315.6 646.0,315.2 647.0,314.7 648.0,314.2 649.0,313.7 650.0,313.2 651.0,312.5 652.0,311.8 653.0,311.0 654.0,310.1 655.0,309.1 656.0,308.1 657.0,307.1 658.0,306.0 659.0,304.9 660.0,303.8 661.0,302.7 662.0,301.7 663.0,300.7 664.0,299.8 665.0,299.0 666.0,298.2 667.0,297.5 668.0,296.9 669.0,296.3 670.0,295.8 671.0,295.2 672.0,294.7 673.0,294.2 674.0,293.7 675.0,293.2 676.0,292.7 677.0,292.2 678.0,291.6 679.0,291.1 680.0,290.5 681.0,289.9 682.0,289.3 683.0,288.7 684.0,288.1 685.0,287.5 686.0,286.9 687.0,286.3 688.0,285.7 689.0,285.1 690.0,284.4 691.0,283.7 692.0,283.0 693.0,282.3 694.0,281.5 695.0,280.7 696.0,280.0 697.0,279.2 698.0,278.4 699.0,277.6 700.0,276.8 701.0,276.0 702.0,275.2 703.0,274.4 704.0,273.6 705.0,272.8 706.0,272.0 707.0,271.2 708.0,270.4 709.0,269.6 710.0,268.8 711.0,268.0 712.0,267.2 713.0,266.4 714.0,265.7 715.0,264.9 716.0,264.3 717.0,263.7 718.0,263.1 719.0,262.6 720.0,262.2 721.0,261.8 722.0,261.4 723.0,261.1 724.0,260.7 725.0,260.4 726.0,260.1 727.0,259.8 728.0,259.5 729.0,259.3 730.0,259.1 731.0,259.0 732.0,259.0 733.0,259.0 734.0,259.0 735.0,259.1 736.0,259.2 737.0,259.3 738.0,259.4 739.0,259.5 740.0,259.6 741.0,259.7 742.0,259.8 743.0,259.9 744.0,260.0 745.0,260.2 746.0,260.3 747.0,260.4 748.0,260.6 749.0,260.7 750.0,260.8 751.0,261.0 752.0,261.1 753.0,261.2 754.0,261.4 755.0,261.5 756.0,261.6 757.0,261.7 758.0,261.8 759.0,261.9 760.0,261.9 761.0,262.0 762.0,262.1 763.0,262.1 764.0,262.2 765.0,262.3 766.0,262.4 767.0,262.5 768.0,262.7 769.0,262.9 770.0,263.1 771.0,263.4 772.0,263.8 773.0,264.2 774.0,264.6 775.0,265.0 776.0,265.5 777.0,265.9 778.0,266.3 779.0,266.7 780.0,267.2 781.0,267.5 782.0,267.9 783.0,268.2 784.0,268.6 785.0,268.9 786.0,269.1 787.0,269.4 788.0,269.7 789.0,269.9 790.0,270.2 791.0,270.4 792.0,270.7 793.0,270.9 794.0,271.1 795.0,271.3 796.0,271.5 797.0,271.6 798.0,271.7 799.0,271.7 800.0,271.7 801.0,271.7 802.0,271.6 803.0,271.5 804.0,271.4 805.0,271.3 806.0,271.2 807.0,271.1 808.0,271.1 809.0,271.0 810.0,271.0 811.0,271.1 812.0,271.1 813.0,271.1 814.0,271.2 815.0,271.3 816.0,271.3 817.0,271.4 818.0,271.4 819.0,271.5 820.0,271.6 821.0,271.6 822.0,271.7 823.0,271.7 824.0,271.8 825.0,271.9 826.0,271.9 827.0,271.9 828.0,271.9 829.0,271.9 830.0,271.9 831.0,271.8 832.0,271.7 833.0,271.6 834.0,271.5 835.0,271.5 836.0,271.4 837.0,271.4 838.0,271.5 839.0,271.7 840.0,272.0 841.0,272.4 842.0,272.9 843.0,273.5 844.0,274.2 845.0,274.9 846.0,275.6 847.0,276.4 848.0,277.1 849.0,277.8 850.0,278.5 851.0,279.2 852.0,279.8 853.0,280.5 854.0,281.1 855.0,281.7 856.0,282.3 857.0,282.9 858.0,283.4 859.0,283.8 860.0,284.2" fill="none" stroke="#16167c" stroke-width="1.4"/><g fill="#e82a32"><circle cx="15.1" cy="269.6" r="1.45"/><circle cx="19.6" cy="269.8" r="1.45"/><circle cx="24.0" cy="269.9" r="1.45"/><circle cx="28.5" cy="270.0" r="1.45"/><circle cx="33.0" cy="270.1" r="1.45"/><circle cx="37.5" cy="270.1" r="1.45"/><circle cx="41.9" cy="269.7" r="1.45"/><circle cx="46.4" cy="269.1" r="1.45"/><circle cx="50.9" cy="268.5" r="1.45"/><circle cx="55.4" cy="267.8" r="1.45"/><circle cx="59.9" cy="267.2" r="1.45"/><circle cx="64.3" cy="266.6" r="1.45"/><circle cx="68.8" cy="266.0" r="1.45"/><circle cx="73.3" cy="265.6" r="1.45"/><circle cx="77.7" cy="265.9" r="1.45"/><circle cx="82.2" cy="266.7" r="1.45"/><circle cx="86.7" cy="267.6" r="1.45"/><circle cx="91.2" cy="268.9" r="1.45"/><circle cx="95.6" cy="270.5" r="1.45"/><circle cx="100.1" cy="272.2" r="1.45"/><circle cx="104.6" cy="274.0" r="1.45"/><circle cx="109.1" cy="275.8" r="1.45"/><circle cx="113.5" cy="277.8" r="1.45"/><circle cx="118.0" cy="280.1" r="1.45"/><circle cx="122.5" cy="282.9" r="1.45"/><circle cx="127.0" cy="285.9" r="1.45"/><circle cx="131.4" cy="289.0" r="1.45"/><circle cx="135.9" cy="292.2" r="1.45"/><circle cx="140.4" cy="295.5" r="1.45"/><circle cx="144.9" cy="298.8" r="1.45"/><circle cx="149.3" cy="301.8" r="1.45"/><circle cx="153.8" cy="304.5" r="1.45"/><circle cx="158.3" cy="307.1" r="1.45"/><circle cx="162.8" cy="309.3" r="1.45"/><circle cx="167.2" cy="310.8" r="1.45"/><circle cx="171.7" cy="311.6" r="1.45"/><circle cx="176.2" cy="311.3" r="1.45"/><circle cx="180.7" cy="310.2" r="1.45"/><circle cx="185.1" cy="308.8" r="1.45"/><circle cx="189.6" cy="307.5" r="1.45"/><circle cx="194.1" cy="306.4" r="1.45"/><circle cx="198.6" cy="305.8" r="1.45"/><circle cx="203.0" cy="305.4" r="1.45"/><circle cx="207.5" cy="305.1" r="1.45"/><circle cx="212.0" cy="304.8" r="1.45"/><circle cx="216.5" cy="304.4" r="1.45"/><circle cx="220.9" cy="304.2" r="1.45"/><circle cx="225.4" cy="304.0" r="1.45"/><circle cx="229.9" cy="303.8" r="1.45"/><circle cx="234.4" cy="303.6" r="1.45"/><circle cx="238.8" cy="303.7" r="1.45"/><circle cx="243.3" cy="304.1" r="1.45"/><circle cx="247.8" cy="304.7" r="1.45"/><circle cx="252.3" cy="305.4" r="1.45"/><circle cx="256.8" cy="306.3" r="1.45"/><circle cx="261.2" cy="307.5" r="1.45"/><circle cx="265.7" cy="309.0" r="1.45"/><circle cx="270.2" cy="310.4" r="1.45"/><circle cx="274.6" cy="311.6" r="1.45"/><circle cx="279.1" cy="312.5" r="1.45"/><circle cx="283.6" cy="313.0" r="1.45"/><circle cx="288.1" cy="312.7" r="1.45"/><circle cx="292.6" cy="311.6" r="1.45"/><circle cx="297.0" cy="310.2" r="1.45"/><circle cx="301.5" cy="308.7" r="1.45"/><circle cx="306.0" cy="307.0" r="1.45"/><circle cx="310.4" cy="305.2" r="1.45"/><circle cx="314.9" cy="303.2" r="1.45"/><circle cx="319.4" cy="301.1" r="1.45"/><circle cx="323.9" cy="298.9" r="1.45"/><circle cx="328.4" cy="296.7" r="1.45"/><circle cx="332.8" cy="294.6" r="1.45"/><circle cx="337.3" cy="292.9" r="1.45"/><circle cx="341.8" cy="291.6" r="1.45"/><circle cx="346.2" cy="290.4" r="1.45"/><circle cx="350.7" cy="289.3" r="1.45"/><circle cx="355.2" cy="288.2" r="1.45"/><circle cx="359.7" cy="287.0" r="1.45"/><circle cx="364.1" cy="285.5" r="1.45"/><circle cx="368.6" cy="283.8" r="1.45"/><circle cx="373.1" cy="282.1" r="1.45"/><circle cx="377.6" cy="280.3" r="1.45"/><circle cx="382.1" cy="278.5" r="1.45"/><circle cx="386.5" cy="276.9" r="1.45"/><circle cx="391.0" cy="275.7" r="1.45"/><circle cx="395.5" cy="274.8" r="1.45"/><circle cx="399.9" cy="274.0" r="1.45"/><circle cx="404.4" cy="273.6" r="1.45"/><circle cx="408.9" cy="273.7" r="1.45"/><circle cx="413.4" cy="274.4" r="1.45"/><circle cx="417.8" cy="275.4" r="1.45"/><circle cx="422.3" cy="276.3" r="1.45"/><circle cx="426.8" cy="277.1" r="1.45"/><circle cx="431.3" cy="277.7" r="1.45"/><circle cx="435.8" cy="278.2" r="1.45"/><circle cx="440.2" cy="278.6" r="1.45"/><circle cx="444.7" cy="279.1" r="1.45"/><circle cx="449.2" cy="279.6" r="1.45"/><circle cx="453.6" cy="280.3" r="1.45"/><circle cx="458.1" cy="281.5" r="1.45"/><circle cx="462.6" cy="282.8" r="1.45"/><circle cx="467.1" cy="284.1" r="1.45"/><circle cx="471.6" cy="285.4" r="1.45"/><circle cx="476.0" cy="286.8" r="1.45"/><circle cx="480.5" cy="288.1" r="1.45"/><circle cx="485.0" cy="289.5" r="1.45"/><circle cx="489.4" cy="290.7" r="1.45"/><circle cx="493.9" cy="291.6" r="1.45"/><circle cx="498.4" cy="292.0" r="1.45"/><circle cx="502.9" cy="292.3" r="1.45"/><circle cx="507.3" cy="292.6" r="1.45"/><circle cx="511.8" cy="292.6" r="1.45"/><circle cx="516.3" cy="292.3" r="1.45"/><circle cx="520.8" cy="291.5" r="1.45"/><circle cx="525.2" cy="290.7" r="1.45"/><circle cx="529.7" cy="290.0" r="1.45"/><circle cx="534.2" cy="289.7" r="1.45"/><circle cx="538.7" cy="290.2" r="1.45"/><circle cx="543.1" cy="291.1" r="1.45"/><circle cx="547.6" cy="292.1" r="1.45"/><circle cx="552.1" cy="293.1" r="1.45"/><circle cx="556.6" cy="294.2" r="1.45"/><circle cx="561.0" cy="295.4" r="1.45"/><circle cx="565.5" cy="296.7" r="1.45"/><circle cx="570.0" cy="298.1" r="1.45"/><circle cx="574.5" cy="299.4" r="1.45"/><circle cx="578.9" cy="300.7" r="1.45"/><circle cx="583.4" cy="301.9" r="1.45"/><circle cx="587.9" cy="302.9" r="1.45"/><circle cx="592.4" cy="303.8" r="1.45"/><circle cx="596.9" cy="304.7" r="1.45"/><circle cx="601.3" cy="305.6" r="1.45"/><circle cx="605.8" cy="306.5" r="1.45"/><circle cx="610.3" cy="307.2" r="1.45"/><circle cx="614.8" cy="307.9" r="1.45"/><circle cx="619.2" cy="308.5" r="1.45"/><circle cx="623.7" cy="309.1" r="1.45"/><circle cx="628.2" cy="309.8" r="1.45"/><circle cx="632.6" cy="310.6" r="1.45"/><circle cx="637.1" cy="311.5" r="1.45"/><circle cx="641.6" cy="312.2" r="1.45"/><circle cx="646.1" cy="312.4" r="1.45"/><circle cx="650.5" cy="311.6" r="1.45"/><circle cx="655.0" cy="310.0" r="1.45"/><circle cx="659.5" cy="308.2" r="1.45"/><circle cx="664.0" cy="306.4" r="1.45"/><circle cx="668.4" cy="304.7" r="1.45"/><circle cx="672.9" cy="302.8" r="1.45"/><circle cx="677.4" cy="300.9" r="1.45"/><circle cx="681.9" cy="298.9" r="1.45"/><circle cx="686.4" cy="296.6" r="1.45"/><circle cx="690.8" cy="293.9" r="1.45"/><circle cx="695.3" cy="290.4" r="1.45"/><circle cx="699.8" cy="286.6" r="1.45"/><circle cx="704.2" cy="283.1" r="1.45"/><circle cx="708.7" cy="280.4" r="1.45"/><circle cx="713.2" cy="278.0" r="1.45"/><circle cx="717.7" cy="275.4" r="1.45"/><circle cx="722.1" cy="272.5" r="1.45"/><circle cx="726.6" cy="269.6" r="1.45"/><circle cx="731.1" cy="267.2" r="1.45"/><circle cx="735.6" cy="265.6" r="1.45"/><circle cx="740.0" cy="264.4" r="1.45"/><circle cx="744.5" cy="263.5" r="1.45"/><circle cx="749.0" cy="262.8" r="1.45"/><circle cx="753.5" cy="262.2" r="1.45"/><circle cx="757.9" cy="261.8" r="1.45"/><circle cx="762.4" cy="261.7" r="1.45"/><circle cx="766.9" cy="261.8" r="1.45"/><circle cx="771.4" cy="262.3" r="1.45"/><circle cx="775.8" cy="263.1" r="1.45"/><circle cx="780.3" cy="264.0" r="1.45"/><circle cx="784.8" cy="265.0" r="1.45"/><circle cx="789.3" cy="266.1" r="1.45"/><circle cx="793.8" cy="267.1" r="1.45"/><circle cx="798.2" cy="268.0" r="1.45"/><circle cx="802.7" cy="268.5" r="1.45"/><circle cx="807.2" cy="268.7" r="1.45"/><circle cx="811.6" cy="269.0" r="1.45"/><circle cx="816.1" cy="269.2" r="1.45"/><circle cx="820.6" cy="269.5" r="1.45"/><circle cx="825.1" cy="269.8" r="1.45"/><circle cx="829.5" cy="270.1" r="1.45"/><circle cx="834.0" cy="270.5" r="1.45"/><circle cx="838.5" cy="271.0" r="1.45"/><circle cx="843.0" cy="271.9" r="1.45"/><circle cx="847.4" cy="273.2" r="1.45"/><circle cx="851.9" cy="274.6" r="1.45"/><circle cx="856.4" cy="275.9" r="1.45"/><circle cx="860.9" cy="276.7" r="1.45"/></g><text x="14.6" y="267" font-size="10" fill="#1c1c78" textLength="28" lengthAdjust="spacingAndGlyphs">MACD</text><rect x="12" y="336" width="848" height="2" fill="#1a1aa8"/><rect x="12" y="388" width="848" height="2" fill="#1a1aa8"/><polygon points="13,398 15.0,361.6 17.0,361.1 19.0,360.5 21.0,359.5 23.0,358.3 25.0,357.1 27.0,356.3 29.0,356.0 31.0,355.6 33.0,355.3 35.0,354.3 37.0,352.8 39.0,351.3 41.0,350.3 43.0,349.3 45.0,348.3 47.0,347.5 49.0,350.2 51.0,352.2 53.0,349.2 55.0,346.2 57.0,344.1 59.0,343.0 61.0,344.5 63.0,352.6 65.0,358.5 67.0,355.7 69.0,352.8 71.0,350.0 73.0,350.2 75.0,351.6 77.0,353.0 79.0,355.1 81.0,358.0 83.0,360.8 85.0,363.7 87.0,366.5 89.0,367.0 91.0,367.2 93.0,367.3 95.0,367.5 97.0,367.6 99.0,367.8 101.0,367.9 103.0,368.1 105.0,369.4 107.0,372.4 109.0,375.4 111.0,373.8 113.0,371.1 115.0,368.9 117.0,368.5 119.0,369.5 121.0,374.5 123.0,379.5 125.0,381.9 127.0,382.9 129.0,384.0 131.0,383.9 133.0,382.1 135.0,380.3 137.0,380.5 139.0,381.3 141.0,382.1 143.0,382.6 145.0,382.8 147.0,382.9 149.0,383.1 151.0,383.3 153.0,384.1 155.0,384.9 157.0,385.7 159.0,386.3 161.0,385.0 163.0,383.6 165.0,382.3 167.0,380.9 169.0,379.4 171.0,377.9 173.0,374.2 175.0,368.7 177.0,363.2 179.0,362.8 181.0,362.6 183.0,362.4 185.0,362.3 187.0,364.2 189.0,366.1 191.0,368.0 193.0,369.9 195.0,371.8 197.0,373.5 199.0,375.2 201.0,376.8 203.0,378.5 205.0,377.2 207.0,375.7 209.0,374.8 211.0,375.1 213.0,375.5 215.0,375.8 217.0,377.1 219.0,379.6 221.0,382.1 223.0,379.5 225.0,375.8 227.0,372.1 229.0,368.5 231.0,369.1 233.0,370.1 235.0,371.1 237.0,372.1 239.0,373.1 241.0,374.8 243.0,376.8 245.0,378.8 247.0,380.8 249.0,382.8 251.0,384.8 253.0,386.8 255.0,388.8 257.0,390.4 259.0,391.0 261.0,391.6 263.0,392.1 265.0,392.7 267.0,393.2 269.0,393.8 271.0,394.3 273.0,394.9 275.0,391.9 277.0,387.9 279.0,384.5 281.0,384.2 283.0,383.9 285.0,382.5 287.0,380.4 289.0,378.2 291.0,375.6 293.0,373.6 295.0,372.0 297.0,368.6 299.0,365.1 301.0,361.4 303.0,360.8 305.0,361.8 307.0,362.7 309.0,360.5 311.0,358.3 313.0,356.1 315.0,354.2 317.0,354.8 319.0,355.3 321.0,355.8 323.0,357.4 325.0,362.6 327.0,367.8 329.0,373.0 331.0,371.2 333.0,369.3 335.0,369.1 337.0,368.9 339.0,368.0 341.0,366.1 343.0,364.2 345.0,362.4 347.0,360.9 349.0,359.7 351.0,358.5 353.0,357.1 355.0,355.8 357.0,354.5 359.0,353.1 361.0,350.1 363.0,347.1 365.0,345.1 367.0,344.6 369.0,344.1 371.0,343.4 373.0,342.7 375.0,342.0 377.0,341.2 379.0,344.5 381.0,348.3 383.0,350.6 385.0,348.8 387.0,347.3 389.0,349.9 391.0,352.4 393.0,352.5 395.0,351.6 397.0,350.8 399.0,349.9 401.0,350.1 403.0,350.6 405.0,351.9 407.0,355.9 409.0,359.9 411.0,363.9 413.0,366.5 415.0,366.0 417.0,365.5 419.0,366.4 421.0,368.0 423.0,369.5 425.0,371.0 427.0,369.9 429.0,368.1 431.0,366.2 433.0,364.9 435.0,364.0 437.0,363.2 439.0,362.3 441.0,361.5 443.0,356.9 445.0,352.4 447.0,353.5 449.0,354.7 451.0,355.8 453.0,356.9 455.0,358.5 457.0,360.5 459.0,362.5 461.0,370.3 463.0,378.9 465.0,380.1 467.0,380.5 469.0,380.9 471.0,382.0 473.0,383.5 475.0,385.1 477.0,384.5 479.0,383.2 481.0,382.0 483.0,380.8 485.0,379.3 487.0,377.8 489.0,375.1 491.0,371.5 493.0,367.9 495.0,365.2 497.0,364.8 499.0,365.4 501.0,367.8 503.0,370.2 505.0,372.6 507.0,372.9 509.0,370.4 511.0,367.8 513.0,365.3 515.0,362.8 517.0,360.3 519.0,357.8 521.0,358.6 523.0,359.7 525.0,360.9 527.0,362.0 529.0,361.8 531.0,361.7 533.0,361.6 535.0,362.2 537.0,369.6 539.0,375.8 541.0,376.0 543.0,376.3 545.0,376.5 547.0,376.7 549.0,376.9 551.0,376.9 553.0,376.2 555.0,375.6 557.0,374.9 559.0,374.2 561.0,373.6 563.0,372.6 565.0,371.3 567.0,372.2 569.0,375.5 571.0,377.3 573.0,377.6 575.0,378.0 577.0,378.3 579.0,378.7 581.0,379.1 583.0,379.4 585.0,379.8 587.0,380.1 589.0,380.5 591.0,380.9 593.0,382.9 595.0,385.8 597.0,386.4 599.0,383.8 601.0,381.2 603.0,379.1 605.0,377.6 607.0,376.2 609.0,375.2 611.0,376.5 613.0,377.8 615.0,380.1 617.0,383.1 619.0,386.1 621.0,386.5 623.0,386.8 625.0,387.7 627.0,389.6 629.0,390.6 631.0,391.6 633.0,392.3 635.0,392.5 637.0,392.7 639.0,393.0 641.0,393.2 643.0,387.6 645.0,381.3 647.0,379.1 649.0,377.1 651.0,370.6 653.0,364.1 655.0,359.4 657.0,357.4 659.0,355.4 661.0,357.6 663.0,360.9 665.0,361.0 667.0,360.5 669.0,360.4 671.0,361.2 673.0,362.1 675.0,363.0 677.0,362.7 679.0,360.1 681.0,357.5 683.0,356.0 685.0,354.8 687.0,353.7 689.0,352.6 691.0,350.5 693.0,348.3 695.0,346.0 697.0,343.8 699.0,341.5 701.0,340.4 703.0,340.1 705.0,339.8 707.0,339.4 709.0,338.6 711.0,337.6 713.0,336.7 715.0,336.0 717.0,335.3 719.0,334.7 721.0,334.0 723.0,333.2 725.0,332.4 727.0,331.6 729.0,340.3 731.0,343.1 733.0,342.2 735.0,341.2 737.0,341.4 739.0,343.6 741.0,345.7 743.0,347.8 745.0,348.6 747.0,347.8 749.0,347.0 751.0,346.2 753.0,345.3 755.0,344.3 757.0,343.4 759.0,343.2 761.0,344.9 763.0,346.6 765.0,346.5 767.0,345.5 769.0,346.3 771.0,347.7 773.0,349.1 775.0,351.9 777.0,356.2 779.0,360.5 781.0,359.3 783.0,357.4 785.0,355.5 787.0,353.6 789.0,353.1 791.0,355.4 793.0,357.7 795.0,357.1 797.0,355.4 799.0,353.6 801.0,351.9 803.0,350.2 805.0,348.5 807.0,347.5 809.0,349.2 811.0,350.9 813.0,351.3 815.0,350.8 817.0,350.3 819.0,349.9 821.0,350.1 823.0,350.6 825.0,351.0 827.0,350.5 829.0,350.0 831.0,348.1 833.0,344.7 835.0,343.8 837.0,344.8 839.0,345.8 841.0,357.1 843.0,369.1 845.0,367.7 847.0,366.3 849.0,369.7 851.0,373.1 853.0,374.7 855.0,374.0 857.0,373.4 859.0,372.7 860,398" fill="url(#rsifill)"/><clipPath id="rmid"><rect x="0" y="337" width="1152" height="52"/></clipPath><clipPath id="rlow"><rect x="0" y="389" width="1152" height="20"/></clipPath><clipPath id="rhigh"><rect x="0" y="320" width="1152" height="17"/></clipPath><polyline points="15.0,361.6 17.0,361.1 19.0,360.5 21.0,359.5 23.0,358.3 25.0,357.1 27.0,356.3 29.0,356.0 31.0,355.6 33.0,355.3 35.0,354.3 37.0,352.8 39.0,351.3 41.0,350.3 43.0,349.3 45.0,348.3 47.0,347.5 49.0,350.2 51.0,352.2 53.0,349.2 55.0,346.2 57.0,344.1 59.0,343.0 61.0,344.5 63.0,352.6 65.0,358.5 67.0,355.7 69.0,352.8 71.0,350.0 73.0,350.2 75.0,351.6 77.0,353.0 79.0,355.1 81.0,358.0 83.0,360.8 85.0,363.7 87.0,366.5 89.0,367.0 91.0,367.2 93.0,367.3 95.0,367.5 97.0,367.6 99.0,367.8 101.0,367.9 103.0,368.1 105.0,369.4 107.0,372.4 109.0,375.4 111.0,373.8 113.0,371.1 115.0,368.9 117.0,368.5 119.0,369.5 121.0,374.5 123.0,379.5 125.0,381.9 127.0,382.9 129.0,384.0 131.0,383.9 133.0,382.1 135.0,380.3 137.0,380.5 139.0,381.3 141.0,382.1 143.0,382.6 145.0,382.8 147.0,382.9 149.0,383.1 151.0,383.3 153.0,384.1 155.0,384.9 157.0,385.7 159.0,386.3 161.0,385.0 163.0,383.6 165.0,382.3 167.0,380.9 169.0,379.4 171.0,377.9 173.0,374.2 175.0,368.7 177.0,363.2 179.0,362.8 181.0,362.6 183.0,362.4 185.0,362.3 187.0,364.2 189.0,366.1 191.0,368.0 193.0,369.9 195.0,371.8 197.0,373.5 199.0,375.2 201.0,376.8 203.0,378.5 205.0,377.2 207.0,375.7 209.0,374.8 211.0,375.1 213.0,375.5 215.0,375.8 217.0,377.1 219.0,379.6 221.0,382.1 223.0,379.5 225.0,375.8 227.0,372.1 229.0,368.5 231.0,369.1 233.0,370.1 235.0,371.1 237.0,372.1 239.0,373.1 241.0,374.8 243.0,376.8 245.0,378.8 247.0,380.8 249.0,382.8 251.0,384.8 253.0,386.8 255.0,388.8 257.0,390.4 259.0,391.0 261.0,391.6 263.0,392.1 265.0,392.7 267.0,393.2 269.0,393.8 271.0,394.3 273.0,394.9 275.0,391.9 277.0,387.9 279.0,384.5 281.0,384.2 283.0,383.9 285.0,382.5 287.0,380.4 289.0,378.2 291.0,375.6 293.0,373.6 295.0,372.0 297.0,368.6 299.0,365.1 301.0,361.4 303.0,360.8 305.0,361.8 307.0,362.7 309.0,360.5 311.0,358.3 313.0,356.1 315.0,354.2 317.0,354.8 319.0,355.3 321.0,355.8 323.0,357.4 325.0,362.6 327.0,367.8 329.0,373.0 331.0,371.2 333.0,369.3 335.0,369.1 337.0,368.9 339.0,368.0 341.0,366.1 343.0,364.2 345.0,362.4 347.0,360.9 349.0,359.7 351.0,358.5 353.0,357.1 355.0,355.8 357.0,354.5 359.0,353.1 361.0,350.1 363.0,347.1 365.0,345.1 367.0,344.6 369.0,344.1 371.0,343.4 373.0,342.7 375.0,342.0 377.0,341.2 379.0,344.5 381.0,348.3 383.0,350.6 385.0,348.8 387.0,347.3 389.0,349.9 391.0,352.4 393.0,352.5 395.0,351.6 397.0,350.8 399.0,349.9 401.0,350.1 403.0,350.6 405.0,351.9 407.0,355.9 409.0,359.9 411.0,363.9 413.0,366.5 415.0,366.0 417.0,365.5 419.0,366.4 421.0,368.0 423.0,369.5 425.0,371.0 427.0,369.9 429.0,368.1 431.0,366.2 433.0,364.9 435.0,364.0 437.0,363.2 439.0,362.3 441.0,361.5 443.0,356.9 445.0,352.4 447.0,353.5 449.0,354.7 451.0,355.8 453.0,356.9 455.0,358.5 457.0,360.5 459.0,362.5 461.0,370.3 463.0,378.9 465.0,380.1 467.0,380.5 469.0,380.9 471.0,382.0 473.0,383.5 475.0,385.1 477.0,384.5 479.0,383.2 481.0,382.0 483.0,380.8 485.0,379.3 487.0,377.8 489.0,375.1 491.0,371.5 493.0,367.9 495.0,365.2 497.0,364.8 499.0,365.4 501.0,367.8 503.0,370.2 505.0,372.6 507.0,372.9 509.0,370.4 511.0,367.8 513.0,365.3 515.0,362.8 517.0,360.3 519.0,357.8 521.0,358.6 523.0,359.7 525.0,360.9 527.0,362.0 529.0,361.8 531.0,361.7 533.0,361.6 535.0,362.2 537.0,369.6 539.0,375.8 541.0,376.0 543.0,376.3 545.0,376.5 547.0,376.7 549.0,376.9 551.0,376.9 553.0,376.2 555.0,375.6 557.0,374.9 559.0,374.2 561.0,373.6 563.0,372.6 565.0,371.3 567.0,372.2 569.0,375.5 571.0,377.3 573.0,377.6 575.0,378.0 577.0,378.3 579.0,378.7 581.0,379.1 583.0,379.4 585.0,379.8 587.0,380.1 589.0,380.5 591.0,380.9 593.0,382.9 595.0,385.8 597.0,386.4 599.0,383.8 601.0,381.2 603.0,379.1 605.0,377.6 607.0,376.2 609.0,375.2 611.0,376.5 613.0,377.8 615.0,380.1 617.0,383.1 619.0,386.1 621.0,386.5 623.0,386.8 625.0,387.7 627.0,389.6 629.0,390.6 631.0,391.6 633.0,392.3 635.0,392.5 637.0,392.7 639.0,393.0 641.0,393.2 643.0,387.6 645.0,381.3 647.0,379.1 649.0,377.1 651.0,370.6 653.0,364.1 655.0,359.4 657.0,357.4 659.0,355.4 661.0,357.6 663.0,360.9 665.0,361.0 667.0,360.5 669.0,360.4 671.0,361.2 673.0,362.1 675.0,363.0 677.0,362.7 679.0,360.1 681.0,357.5 683.0,356.0 685.0,354.8 687.0,353.7 689.0,352.6 691.0,350.5 693.0,348.3 695.0,346.0 697.0,343.8 699.0,341.5 701.0,340.4 703.0,340.1 705.0,339.8 707.0,339.4 709.0,338.6 711.0,337.6 713.0,336.7 715.0,336.0 717.0,335.3 719.0,334.7 721.0,334.0 723.0,333.2 725.0,332.4 727.0,331.6 729.0,340.3 731.0,343.1 733.0,342.2 735.0,341.2 737.0,341.4 739.0,343.6 741.0,345.7 743.0,347.8 745.0,348.6 747.0,347.8 749.0,347.0 751.0,346.2 753.0,345.3 755.0,344.3 757.0,343.4 759.0,343.2 761.0,344.9 763.0,346.6 765.0,346.5 767.0,345.5 769.0,346.3 771.0,347.7 773.0,349.1 775.0,351.9 777.0,356.2 779.0,360.5 781.0,359.3 783.0,357.4 785.0,355.5 787.0,353.6 789.0,353.1 791.0,355.4 793.0,357.7 795.0,357.1 797.0,355.4 799.0,353.6 801.0,351.9 803.0,350.2 805.0,348.5 807.0,347.5 809.0,349.2 811.0,350.9 813.0,351.3 815.0,350.8 817.0,350.3 819.0,349.9 821.0,350.1 823.0,350.6 825.0,351.0 827.0,350.5 829.0,350.0 831.0,348.1 833.0,344.7 835.0,343.8 837.0,344.8 839.0,345.8 841.0,357.1 843.0,369.1 845.0,367.7 847.0,366.3 849.0,369.7 851.0,373.1 853.0,374.7 855.0,374.0 857.0,373.4 859.0,372.7" fill="none" stroke="#f0902a" stroke-width="1" clip-path="url(#rmid)"/><polyline points="15.0,361.6 17.0,361.1 19.0,360.5 21.0,359.5 23.0,358.3 25.0,357.1 27.0,356.3 29.0,356.0 31.0,355.6 33.0,355.3 35.0,354.3 37.0,352.8 39.0,351.3 41.0,350.3 43.0,349.3 45.0,348.3 47.0,347.5 49.0,350.2 51.0,352.2 53.0,349.2 55.0,346.2 57.0,344.1 59.0,343.0 61.0,344.5 63.0,352.6 65.0,358.5 67.0,355.7 69.0,352.8 71.0,350.0 73.0,350.2 75.0,351.6 77.0,353.0 79.0,355.1 81.0,358.0 83.0,360.8 85.0,363.7 87.0,366.5 89.0,367.0 91.0,367.2 93.0,367.3 95.0,367.5 97.0,367.6 99.0,367.8 101.0,367.9 103.0,368.1 105.0,369.4 107.0,372.4 109.0,375.4 111.0,373.8 113.0,371.1 115.0,368.9 117.0,368.5 119.0,369.5 121.0,374.5 123.0,379.5 125.0,381.9 127.0,382.9 129.0,384.0 131.0,383.9 133.0,382.1 135.0,380.3 137.0,380.5 139.0,381.3 141.0,382.1 143.0,382.6 145.0,382.8 147.0,382.9 149.0,383.1 151.0,383.3 153.0,384.1 155.0,384.9 157.0,385.7 159.0,386.3 161.0,385.0 163.0,383.6 165.0,382.3 167.0,380.9 169.0,379.4 171.0,377.9 173.0,374.2 175.0,368.7 177.0,363.2 179.0,362.8 181.0,362.6 183.0,362.4 185.0,362.3 187.0,364.2 189.0,366.1 191.0,368.0 193.0,369.9 195.0,371.8 197.0,373.5 199.0,375.2 201.0,376.8 203.0,378.5 205.0,377.2 207.0,375.7 209.0,374.8 211.0,375.1 213.0,375.5 215.0,375.8 217.0,377.1 219.0,379.6 221.0,382.1 223.0,379.5 225.0,375.8 227.0,372.1 229.0,368.5 231.0,369.1 233.0,370.1 235.0,371.1 237.0,372.1 239.0,373.1 241.0,374.8 243.0,376.8 245.0,378.8 247.0,380.8 249.0,382.8 251.0,384.8 253.0,386.8 255.0,388.8 257.0,390.4 259.0,391.0 261.0,391.6 263.0,392.1 265.0,392.7 267.0,393.2 269.0,393.8 271.0,394.3 273.0,394.9 275.0,391.9 277.0,387.9 279.0,384.5 281.0,384.2 283.0,383.9 285.0,382.5 287.0,380.4 289.0,378.2 291.0,375.6 293.0,373.6 295.0,372.0 297.0,368.6 299.0,365.1 301.0,361.4 303.0,360.8 305.0,361.8 307.0,362.7 309.0,360.5 311.0,358.3 313.0,356.1 315.0,354.2 317.0,354.8 319.0,355.3 321.0,355.8 323.0,357.4 325.0,362.6 327.0,367.8 329.0,373.0 331.0,371.2 333.0,369.3 335.0,369.1 337.0,368.9 339.0,368.0 341.0,366.1 343.0,364.2 345.0,362.4 347.0,360.9 349.0,359.7 351.0,358.5 353.0,357.1 355.0,355.8 357.0,354.5 359.0,353.1 361.0,350.1 363.0,347.1 365.0,345.1 367.0,344.6 369.0,344.1 371.0,343.4 373.0,342.7 375.0,342.0 377.0,341.2 379.0,344.5 381.0,348.3 383.0,350.6 385.0,348.8 387.0,347.3 389.0,349.9 391.0,352.4 393.0,352.5 395.0,351.6 397.0,350.8 399.0,349.9 401.0,350.1 403.0,350.6 405.0,351.9 407.0,355.9 409.0,359.9 411.0,363.9 413.0,366.5 415.0,366.0 417.0,365.5 419.0,366.4 421.0,368.0 423.0,369.5 425.0,371.0 427.0,369.9 429.0,368.1 431.0,366.2 433.0,364.9 435.0,364.0 437.0,363.2 439.0,362.3 441.0,361.5 443.0,356.9 445.0,352.4 447.0,353.5 449.0,354.7 451.0,355.8 453.0,356.9 455.0,358.5 457.0,360.5 459.0,362.5 461.0,370.3 463.0,378.9 465.0,380.1 467.0,380.5 469.0,380.9 471.0,382.0 473.0,383.5 475.0,385.1 477.0,384.5 479.0,383.2 481.0,382.0 483.0,380.8 485.0,379.3 487.0,377.8 489.0,375.1 491.0,371.5 493.0,367.9 495.0,365.2 497.0,364.8 499.0,365.4 501.0,367.8 503.0,370.2 505.0,372.6 507.0,372.9 509.0,370.4 511.0,367.8 513.0,365.3 515.0,362.8 517.0,360.3 519.0,357.8 521.0,358.6 523.0,359.7 525.0,360.9 527.0,362.0 529.0,361.8 531.0,361.7 533.0,361.6 535.0,362.2 537.0,369.6 539.0,375.8 541.0,376.0 543.0,376.3 545.0,376.5 547.0,376.7 549.0,376.9 551.0,376.9 553.0,376.2 555.0,375.6 557.0,374.9 559.0,374.2 561.0,373.6 563.0,372.6 565.0,371.3 567.0,372.2 569.0,375.5 571.0,377.3 573.0,377.6 575.0,378.0 577.0,378.3 579.0,378.7 581.0,379.1 583.0,379.4 585.0,379.8 587.0,380.1 589.0,380.5 591.0,380.9 593.0,382.9 595.0,385.8 597.0,386.4 599.0,383.8 601.0,381.2 603.0,379.1 605.0,377.6 607.0,376.2 609.0,375.2 611.0,376.5 613.0,377.8 615.0,380.1 617.0,383.1 619.0,386.1 621.0,386.5 623.0,386.8 625.0,387.7 627.0,389.6 629.0,390.6 631.0,391.6 633.0,392.3 635.0,392.5 637.0,392.7 639.0,393.0 641.0,393.2 643.0,387.6 645.0,381.3 647.0,379.1 649.0,377.1 651.0,370.6 653.0,364.1 655.0,359.4 657.0,357.4 659.0,355.4 661.0,357.6 663.0,360.9 665.0,361.0 667.0,360.5 669.0,360.4 671.0,361.2 673.0,362.1 675.0,363.0 677.0,362.7 679.0,360.1 681.0,357.5 683.0,356.0 685.0,354.8 687.0,353.7 689.0,352.6 691.0,350.5 693.0,348.3 695.0,346.0 697.0,343.8 699.0,341.5 701.0,340.4 703.0,340.1 705.0,339.8 707.0,339.4 709.0,338.6 711.0,337.6 713.0,336.7 715.0,336.0 717.0,335.3 719.0,334.7 721.0,334.0 723.0,333.2 725.0,332.4 727.0,331.6 729.0,340.3 731.0,343.1 733.0,342.2 735.0,341.2 737.0,341.4 739.0,343.6 741.0,345.7 743.0,347.8 745.0,348.6 747.0,347.8 749.0,347.0 751.0,346.2 753.0,345.3 755.0,344.3 757.0,343.4 759.0,343.2 761.0,344.9 763.0,346.6 765.0,346.5 767.0,345.5 769.0,346.3 771.0,347.7 773.0,349.1 775.0,351.9 777.0,356.2 779.0,360.5 781.0,359.3 783.0,357.4 785.0,355.5 787.0,353.6 789.0,353.1 791.0,355.4 793.0,357.7 795.0,357.1 797.0,355.4 799.0,353.6 801.0,351.9 803.0,350.2 805.0,348.5 807.0,347.5 809.0,349.2 811.0,350.9 813.0,351.3 815.0,350.8 817.0,350.3 819.0,349.9 821.0,350.1 823.0,350.6 825.0,351.0 827.0,350.5 829.0,350.0 831.0,348.1 833.0,344.7 835.0,343.8 837.0,344.8 839.0,345.8 841.0,357.1 843.0,369.1 845.0,367.7 847.0,366.3 849.0,369.7 851.0,373.1 853.0,374.7 855.0,374.0 857.0,373.4 859.0,372.7" fill="none" stroke="#30d030" stroke-width="1.2" clip-path="url(#rlow)"/><polyline points="15.0,361.6 17.0,361.1 19.0,360.5 21.0,359.5 23.0,358.3 25.0,357.1 27.0,356.3 29.0,356.0 31.0,355.6 33.0,355.3 35.0,354.3 37.0,352.8 39.0,351.3 41.0,350.3 43.0,349.3 45.0,348.3 47.0,347.5 49.0,350.2 51.0,352.2 53.0,349.2 55.0,346.2 57.0,344.1 59.0,343.0 61.0,344.5 63.0,352.6 65.0,358.5 67.0,355.7 69.0,352.8 71.0,350.0 73.0,350.2 75.0,351.6 77.0,353.0 79.0,355.1 81.0,358.0 83.0,360.8 85.0,363.7 87.0,366.5 89.0,367.0 91.0,367.2 93.0,367.3 95.0,367.5 97.0,367.6 99.0,367.8 101.0,367.9 103.0,368.1 105.0,369.4 107.0,372.4 109.0,375.4 111.0,373.8 113.0,371.1 115.0,368.9 117.0,368.5 119.0,369.5 121.0,374.5 123.0,379.5 125.0,381.9 127.0,382.9 129.0,384.0 131.0,383.9 133.0,382.1 135.0,380.3 137.0,380.5 139.0,381.3 141.0,382.1 143.0,382.6 145.0,382.8 147.0,382.9 149.0,383.1 151.0,383.3 153.0,384.1 155.0,384.9 157.0,385.7 159.0,386.3 161.0,385.0 163.0,383.6 165.0,382.3 167.0,380.9 169.0,379.4 171.0,377.9 173.0,374.2 175.0,368.7 177.0,363.2 179.0,362.8 181.0,362.6 183.0,362.4 185.0,362.3 187.0,364.2 189.0,366.1 191.0,368.0 193.0,369.9 195.0,371.8 197.0,373.5 199.0,375.2 201.0,376.8 203.0,378.5 205.0,377.2 207.0,375.7 209.0,374.8 211.0,375.1 213.0,375.5 215.0,375.8 217.0,377.1 219.0,379.6 221.0,382.1 223.0,379.5 225.0,375.8 227.0,372.1 229.0,368.5 231.0,369.1 233.0,370.1 235.0,371.1 237.0,372.1 239.0,373.1 241.0,374.8 243.0,376.8 245.0,378.8 247.0,380.8 249.0,382.8 251.0,384.8 253.0,386.8 255.0,388.8 257.0,390.4 259.0,391.0 261.0,391.6 263.0,392.1 265.0,392.7 267.0,393.2 269.0,393.8 271.0,394.3 273.0,394.9 275.0,391.9 277.0,387.9 279.0,384.5 281.0,384.2 283.0,383.9 285.0,382.5 287.0,380.4 289.0,378.2 291.0,375.6 293.0,373.6 295.0,372.0 297.0,368.6 299.0,365.1 301.0,361.4 303.0,360.8 305.0,361.8 307.0,362.7 309.0,360.5 311.0,358.3 313.0,356.1 315.0,354.2 317.0,354.8 319.0,355.3 321.0,355.8 323.0,357.4 325.0,362.6 327.0,367.8 329.0,373.0 331.0,371.2 333.0,369.3 335.0,369.1 337.0,368.9 339.0,368.0 341.0,366.1 343.0,364.2 345.0,362.4 347.0,360.9 349.0,359.7 351.0,358.5 353.0,357.1 355.0,355.8 357.0,354.5 359.0,353.1 361.0,350.1 363.0,347.1 365.0,345.1 367.0,344.6 369.0,344.1 371.0,343.4 373.0,342.7 375.0,342.0 377.0,341.2 379.0,344.5 381.0,348.3 383.0,350.6 385.0,348.8 387.0,347.3 389.0,349.9 391.0,352.4 393.0,352.5 395.0,351.6 397.0,350.8 399.0,349.9 401.0,350.1 403.0,350.6 405.0,351.9 407.0,355.9 409.0,359.9 411.0,363.9 413.0,366.5 415.0,366.0 417.0,365.5 419.0,366.4 421.0,368.0 423.0,369.5 425.0,371.0 427.0,369.9 429.0,368.1 431.0,366.2 433.0,364.9 435.0,364.0 437.0,363.2 439.0,362.3 441.0,361.5 443.0,356.9 445.0,352.4 447.0,353.5 449.0,354.7 451.0,355.8 453.0,356.9 455.0,358.5 457.0,360.5 459.0,362.5 461.0,370.3 463.0,378.9 465.0,380.1 467.0,380.5 469.0,380.9 471.0,382.0 473.0,383.5 475.0,385.1 477.0,384.5 479.0,383.2 481.0,382.0 483.0,380.8 485.0,379.3 487.0,377.8 489.0,375.1 491.0,371.5 493.0,367.9 495.0,365.2 497.0,364.8 499.0,365.4 501.0,367.8 503.0,370.2 505.0,372.6 507.0,372.9 509.0,370.4 511.0,367.8 513.0,365.3 515.0,362.8 517.0,360.3 519.0,357.8 521.0,358.6 523.0,359.7 525.0,360.9 527.0,362.0 529.0,361.8 531.0,361.7 533.0,361.6 535.0,362.2 537.0,369.6 539.0,375.8 541.0,376.0 543.0,376.3 545.0,376.5 547.0,376.7 549.0,376.9 551.0,376.9 553.0,376.2 555.0,375.6 557.0,374.9 559.0,374.2 561.0,373.6 563.0,372.6 565.0,371.3 567.0,372.2 569.0,375.5 571.0,377.3 573.0,377.6 575.0,378.0 577.0,378.3 579.0,378.7 581.0,379.1 583.0,379.4 585.0,379.8 587.0,380.1 589.0,380.5 591.0,380.9 593.0,382.9 595.0,385.8 597.0,386.4 599.0,383.8 601.0,381.2 603.0,379.1 605.0,377.6 607.0,376.2 609.0,375.2 611.0,376.5 613.0,377.8 615.0,380.1 617.0,383.1 619.0,386.1 621.0,386.5 623.0,386.8 625.0,387.7 627.0,389.6 629.0,390.6 631.0,391.6 633.0,392.3 635.0,392.5 637.0,392.7 639.0,393.0 641.0,393.2 643.0,387.6 645.0,381.3 647.0,379.1 649.0,377.1 651.0,370.6 653.0,364.1 655.0,359.4 657.0,357.4 659.0,355.4 661.0,357.6 663.0,360.9 665.0,361.0 667.0,360.5 669.0,360.4 671.0,361.2 673.0,362.1 675.0,363.0 677.0,362.7 679.0,360.1 681.0,357.5 683.0,356.0 685.0,354.8 687.0,353.7 689.0,352.6 691.0,350.5 693.0,348.3 695.0,346.0 697.0,343.8 699.0,341.5 701.0,340.4 703.0,340.1 705.0,339.8 707.0,339.4 709.0,338.6 711.0,337.6 713.0,336.7 715.0,336.0 717.0,335.3 719.0,334.7 721.0,334.0 723.0,333.2 725.0,332.4 727.0,331.6 729.0,340.3 731.0,343.1 733.0,342.2 735.0,341.2 737.0,341.4 739.0,343.6 741.0,345.7 743.0,347.8 745.0,348.6 747.0,347.8 749.0,347.0 751.0,346.2 753.0,345.3 755.0,344.3 757.0,343.4 759.0,343.2 761.0,344.9 763.0,346.6 765.0,346.5 767.0,345.5 769.0,346.3 771.0,347.7 773.0,349.1 775.0,351.9 777.0,356.2 779.0,360.5 781.0,359.3 783.0,357.4 785.0,355.5 787.0,353.6 789.0,353.1 791.0,355.4 793.0,357.7 795.0,357.1 797.0,355.4 799.0,353.6 801.0,351.9 803.0,350.2 805.0,348.5 807.0,347.5 809.0,349.2 811.0,350.9 813.0,351.3 815.0,350.8 817.0,350.3 819.0,349.9 821.0,350.1 823.0,350.6 825.0,351.0 827.0,350.5 829.0,350.0 831.0,348.1 833.0,344.7 835.0,343.8 837.0,344.8 839.0,345.8 841.0,357.1 843.0,369.1 845.0,367.7 847.0,366.3 849.0,369.7 851.0,373.1 853.0,374.7 855.0,374.0 857.0,373.4 859.0,372.7" fill="none" stroke="#c040d0" stroke-width="1.2" clip-path="url(#rhigh)"/><rect x="13" y="331" width="17" height="10" fill="#3b4149"/><text x="14.8" y="340" font-size="10" fill="#f0963c" textLength="14" lengthAdjust="spacingAndGlyphs">RSI</text><rect x="12.5" y="38.5" width="876" height="211" fill="none" stroke="#a9b9c9" stroke-width="1"/><rect x="12.5" y="255.5" width="876" height="67" fill="none" stroke="#a9b9c9" stroke-width="1"/><rect x="12.5" y="328.5" width="876" height="70" fill="none" stroke="#a9b9c9" stroke-width="1"/><line x1="888" y1="71.5" x2="892" y2="71.5" stroke="#a9b9c9"/><text x="896" y="78" font-size="11" fill="#f4f4f4">1.2300</text><line x1="888" y1="119.5" x2="892" y2="119.5" stroke="#a9b9c9"/><text x="896" y="126" font-size="11" fill="#f4f4f4">1.2200</text><line x1="888" y1="215.5" x2="892" y2="215.5" stroke="#a9b9c9"/><text x="896" y="222" font-size="11" fill="#f4f4f4">1.2000</text><rect x="888" y="161" width="48" height="21" fill="#ffffff"/><text x="897" y="175" font-size="11" fill="#404040">1.2092</text><line x1="888" y1="284.5" x2="892" y2="284.5" stroke="#a9b9c9"/><text x="897" y="291" font-size="11" fill="#f4f4f4">+0.000</text><line x1="888" y1="350.5" x2="892" y2="350.5" stroke="#a9b9c9"/><text x="896" y="356" font-size="11" fill="#f4f4f4">60</text><line x1="888" y1="376.5" x2="892" y2="376.5" stroke="#a9b9c9"/><text x="896" y="382" font-size="11" fill="#f4f4f4">40</text><path d="M13.75 375.75 H72.5 L73.75 377 V393.5 L72.5 394.75 H13.75 Z" fill="#5a687c" stroke="#c4d2e0" stroke-width="1.5"/><rect x="13" y="375" width="2" height="27" fill="#d8ece4"/><text x="22" y="389" font-size="11" fill="#f4f4f4" textLength="44.5" lengthAdjust="spacingAndGlyphs">Янв 2021</text><path d="M529.75 375.75 H590.0 L591.25 377 V393.5 L590.0 394.75 H529.75 Z" fill="#5a687c" stroke="#c4d2e0" stroke-width="1.5"/><rect x="529" y="375" width="2" height="27" fill="#d8ece4"/><text x="538" y="389" font-size="11" fill="#f4f4f4" textLength="44.5" lengthAdjust="spacingAndGlyphs">Фев 2021</text><path d="M19.5 398 V402 M46.5 398 V402 M73.5 398 V402 M100.5 398 V402 M127.5 398 V402 M153.5 398 V402 M180.5 398 V402 M207.5 398 V402 M234.5 398 V402 M261.5 398 V402 M288.5 398 V402 M314.5 398 V402 M341.5 398 V402 M368.5 398 V402 M395.5 398 V402 M422.5 398 V402 M449.5 398 V402 M475.5 398 V402 M502.5 398 V402 M529.5 398 V402 M556.5 398 V402 M583.5 398 V402 M610.5 398 V402 M637.5 398 V402 M663.5 398 V402 M690.5 398 V402 M717.5 398 V402 M744.5 398 V402 M771.5 398 V402 M798.5 398 V402 M824.5 398 V402 M851.5 398 V402 M878.5 398 V402" stroke="#a9b9c9" stroke-width="1"/><text x="19.2" y="421" font-size="11" fill="#f4f4f4" text-anchor="middle">5</text><text x="46.0" y="421" font-size="11" fill="#f4f4f4" text-anchor="middle">6</text><text x="72.9" y="421" font-size="11" fill="#f4f4f4" text-anchor="middle">7</text><text x="99.7" y="421" font-size="11" fill="#f4f4f4" text-anchor="middle">8</text><text x="126.6" y="421" font-size="11" fill="#f4f4f4" text-anchor="middle">11</text><text x="153.4" y="421" font-size="11" fill="#f4f4f4" text-anchor="middle">12</text><text x="180.2" y="421" font-size="11" fill="#f4f4f4" text-anchor="middle">13</text><text x="207.1" y="421" font-size="11" fill="#f4f4f4" text-anchor="middle">14</text><text x="233.9" y="421" font-size="11" fill="#f4f4f4" text-anchor="middle">15</text><text x="260.8" y="421" font-size="11" fill="#f4f4f4" text-anchor="middle">18</text><text x="287.6" y="421" font-size="11" fill="#f4f4f4" text-anchor="middle">19</text><text x="314.4" y="421" font-size="11" fill="#f4f4f4" text-anchor="middle">20</text><text x="341.3" y="421" font-size="11" fill="#f4f4f4" text-anchor="middle">21</text><text x="368.1" y="421" font-size="11" fill="#f4f4f4" text-anchor="middle">22</text><text x="395.0" y="421" font-size="11" fill="#f4f4f4" text-anchor="middle">25</text><text x="421.8" y="421" font-size="11" fill="#f4f4f4" text-anchor="middle">26</text><text x="448.6" y="421" font-size="11" fill="#f4f4f4" text-anchor="middle">27</text><text x="475.5" y="421" font-size="11" fill="#f4f4f4" text-anchor="middle">28</text><text x="502.3" y="421" font-size="11" fill="#f4f4f4" text-anchor="middle">29</text><text x="529.2" y="421" font-size="11" fill="#f4f4f4" text-anchor="middle">1</text><text x="556.0" y="421" font-size="11" fill="#f4f4f4" text-anchor="middle">2</text><text x="582.8" y="421" font-size="11" fill="#f4f4f4" text-anchor="middle">3</text><text x="609.7" y="421" font-size="11" fill="#f4f4f4" text-anchor="middle">4</text><text x="636.5" y="421" font-size="11" fill="#f4f4f4" text-anchor="middle">5</text><text x="663.4" y="421" font-size="11" fill="#f4f4f4" text-anchor="middle">8</text><text x="690.2" y="421" font-size="11" fill="#f4f4f4" text-anchor="middle">9</text><text x="717.0" y="421" font-size="11" fill="#f4f4f4" text-anchor="middle">10</text><text x="743.9" y="421" font-size="11" fill="#f4f4f4" text-anchor="middle">11</text><text x="770.7" y="421" font-size="11" fill="#f4f4f4" text-anchor="middle">12</text><text x="797.6" y="421" font-size="11" fill="#f4f4f4" text-anchor="middle">15</text><text x="824.4" y="421" font-size="11" fill="#f4f4f4" text-anchor="middle">16</text><text x="851.2" y="421" font-size="11" fill="#f4f4f4" text-anchor="middle">17</text><text x="878.1" y="421" font-size="11" fill="#f4f4f4" text-anchor="middle">18</text></svg>
</body></html>
